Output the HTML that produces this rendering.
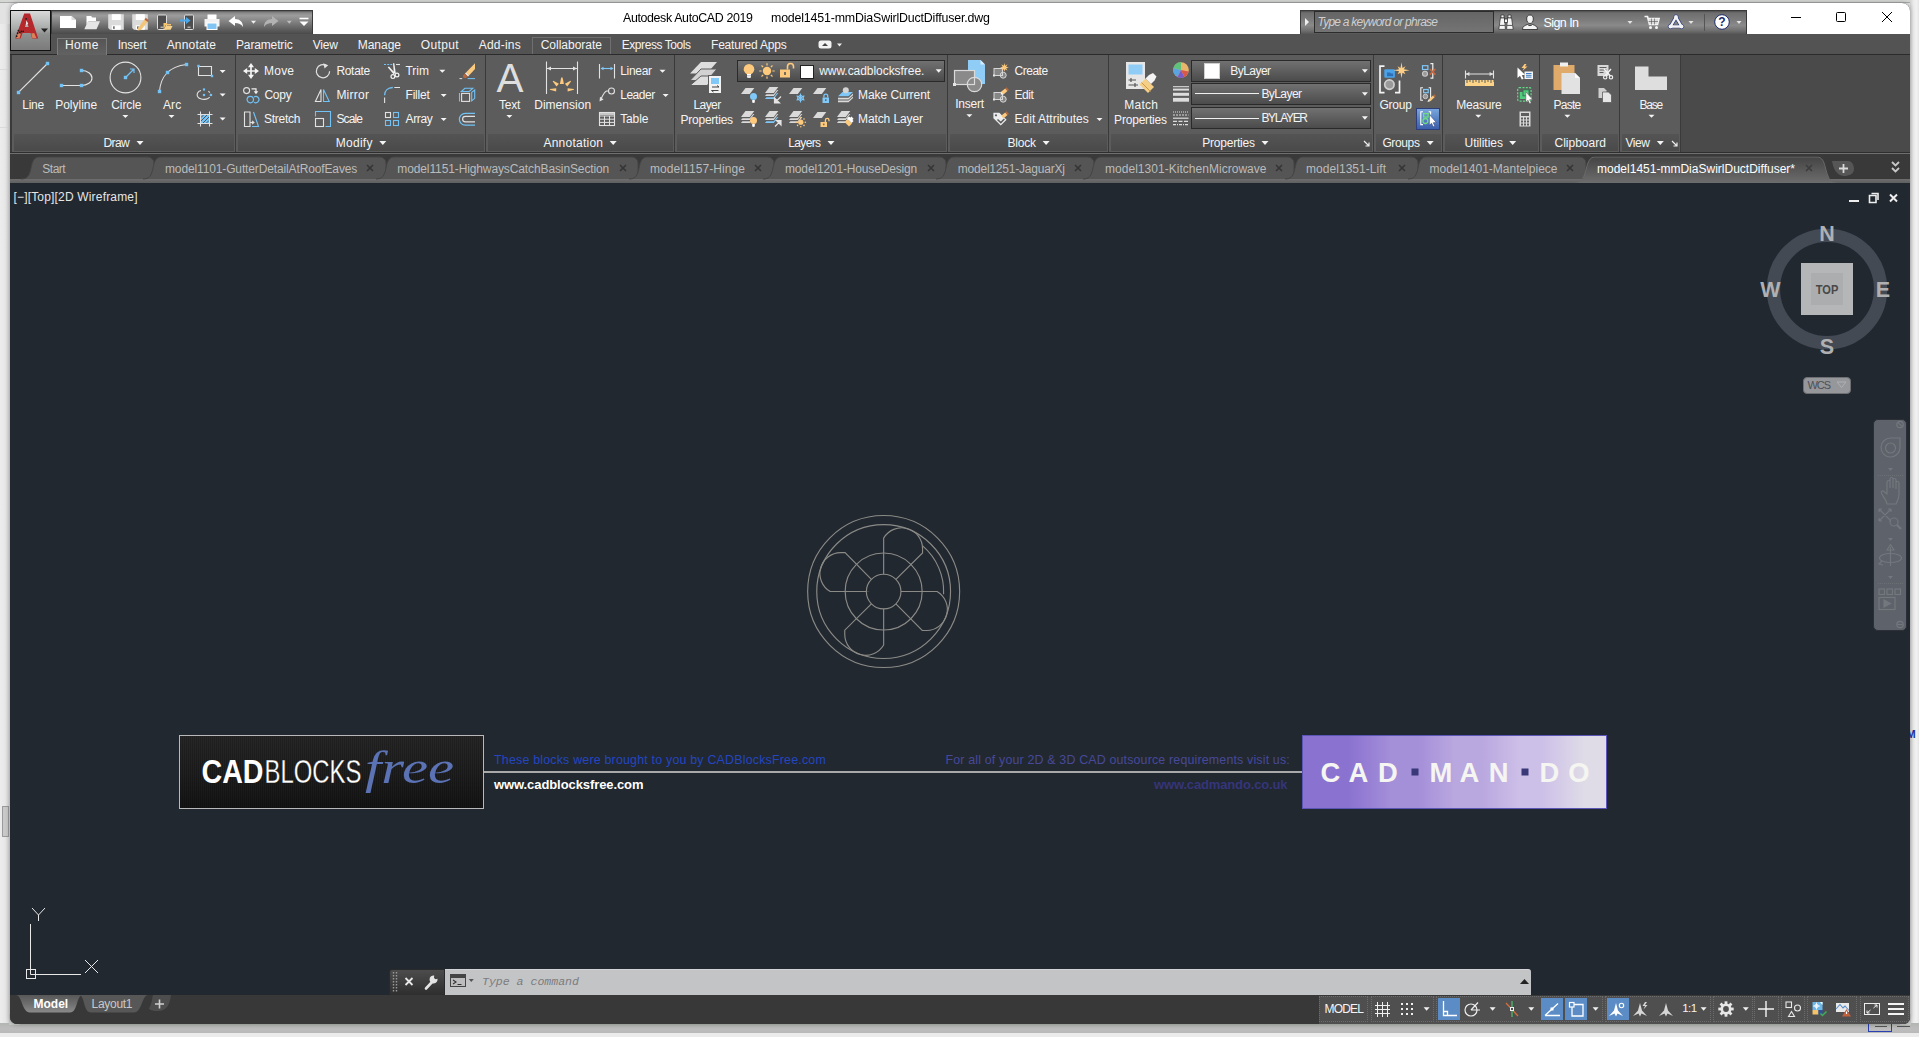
<!DOCTYPE html>
<html lang="en"><head><meta charset="utf-8"><title>Autodesk AutoCAD 2019 - model1451-mmDiaSwirlDuctDiffuser.dwg</title>
<style>
html,body{margin:0;padding:0;}
body{width:1919px;height:1037px;overflow:hidden;position:relative;background:#ececec;font-family:"Liberation Sans",sans-serif;font-size:12px;}
.b{position:absolute;display:block;}
.t{position:absolute;white-space:nowrap;display:block;}
svg{overflow:visible}
</style></head>
<body>
<div class="b" style="left:0px;top:0px;width:1919px;height:24px;background:#e3e3e3;"></div>
<div class="b" style="left:0px;top:0px;width:1919px;height:3px;background:#d5d7d5;"></div>
<div class="b" style="left:0px;top:2px;width:1919px;height:1px;background:#a9aba9;"></div>
<div class="b" style="left:0px;top:24px;width:10px;height:1013px;background:#e8e8e8;background:linear-gradient(90deg,#ededed 0,#e6e6e6 55%,#d2d2d2 100%);"></div>
<div class="b" style="left:1910px;top:0px;width:9px;height:1037px;background:#e6e6e6;background:linear-gradient(90deg,#d2d2d2 0,#ebebeb 40%,#f1f1f1 75%,#e4e4e4 100%);"></div>
<div class="b" style="left:0px;top:1023px;width:1919px;height:14px;background:#ebebeb;"></div>
<div class="b" style="left:0px;top:1023px;width:1919px;height:9.6px;background:#b9bbb9;background:linear-gradient(#b2b6b2,#bdbdbd 60%,#b8b8b8);"></div>
<div class="b" style="left:2px;top:806px;width:7px;height:31px;background:#c9c9c9;border:1px solid #9a9a9a;box-sizing:border-box;"></div>
<div class="b" style="left:1868px;top:1024px;width:24px;height:8px;background:transparent;border:1px solid #2a3fb0;border-top:none;box-sizing:border-box;"></div>
<div class="b" style="left:1875px;top:1026px;width:12px;height:1px;background:#555;"></div>
<div class="b" style="left:1897px;top:1026px;width:13px;height:1px;background:#555;"></div>
<div class="b" style="left:0px;top:69px;width:9px;height:1px;background:#dadada;"></div>
<div class="b" style="left:0px;top:127px;width:9px;height:1px;background:#dadada;"></div>
<span class="t" style="left:1906.50px;top:729.00px;font-size:11px;line-height:11px;color:#2030a8;font-weight:700;">M</span>
<div class="b" style="left:9px;top:1014px;width:11px;height:11px;background:#c9c9c9;"></div>
<div class="b" style="left:1900px;top:1014px;width:11px;height:11px;background:#c9c9c9;"></div>
<div class="b" style="left:10px;top:3px;width:1900px;height:1021px;background:#212830;border-radius:8px 8px 7px 7px;box-shadow:0 0 5px rgba(0,0,0,.3);"></div>
<div class="b" style="left:10px;top:3px;width:1900px;height:31px;background:#ffffff;border-radius:8px 8px 0 0;"></div>
<div class="b" style="left:10px;top:34px;width:1900px;height:21px;background:#535353;"></div>
<div class="b" style="left:10px;top:54px;width:1900px;height:1px;background:#2b2b2b;"></div>
<div class="b" style="left:10px;top:55px;width:1900px;height:98px;background:#4a4a4a;"></div>
<div class="b" style="left:10px;top:152px;width:1900px;height:1px;background:#2e2e2e;"></div>
<div class="b" style="left:10px;top:153px;width:1900px;height:26px;background:#393939;"></div>
<div class="b" style="left:10px;top:179px;width:1900px;height:4px;background:#666;background:linear-gradient(#6e6e6e,#606060);"></div>
<div class="b" style="left:10px;top:183px;width:1900px;height:812px;background:#212830;"></div>
<div class="b" style="left:10px;top:995px;width:1900px;height:29px;background:#383838;border-radius:0 0 7px 7px;"></div>
<div class="b" style="left:10px;top:10px;width:41px;height:41px;background:#8a8a8a;border:1px solid #111;box-sizing:border-box;background:linear-gradient(#d9d9d9 0%,#a9abab 45%,#8e8f8f 60%,#7b7b7b 100%);"></div>
<svg class="b" style="left:14px;top:12px;" width="26" height="28" viewBox="0 0 26 28"><path d="M10.2 1.5 L16 1.5 L24.2 26.5 L18.2 26.5 L16.6 21 L8.6 21 L6.6 26.5 L1.2 26.5 Z M12.7 9.3 L11 15 L14.6 15 Z" fill="#b5282c"/><path d="M2.2 26 L4.2 20.5 L6.8 21.8 L5.6 26.2Z M18.4 26.2 L17.2 21.5 L20.2 21 L22.4 26Z" fill="#d8835a"/><path d="M12.4 8.2 L14.2 11.8 L11.8 13 Z" fill="#e9e9e9"/><g fill="#1c1c1c"><circle cx="12.2" cy="6.8" r=".9"/><circle cx="4.4" cy="18.6" r=".9"/><circle cx="3.6" cy="21.2" r=".9"/><circle cx="2.6" cy="24.2" r=".9"/><circle cx="5.8" cy="20.4" r=".9"/><circle cx="7.4" cy="19.4" r=".8"/><circle cx="9.2" cy="19.4" r=".8"/></g></svg>
<svg class="b" style="left:41px;top:28px;" width="8" height="5" viewBox="0 0 8 5"><path d="M0 0.5 h7 l-3.5 4 z" fill="#222"/></svg>
<div class="b" style="left:51px;top:10px;width:262px;height:24px;background:#666;background:linear-gradient(#5a5a5a 0%,#8a8a8a 8%,#9c9c9c 20%,#7e7e7e 50%,#5e5e5e 80%,#4a4a4a 100%);border:1px solid #3a3a3a;border-bottom:none;box-sizing:border-box;"></div>
<div class="b" style="left:1300px;top:10px;width:447px;height:24px;background:#666;background:linear-gradient(#4c4c4c 0%,#6e6e6e 8%,#7c7c7c 40%,#8a8a8a 62%,#707070 85%,#565656 100%);border:1px solid #3a3a3a;border-bottom:none;box-sizing:border-box;"></div>
<div class="b" style="left:1314px;top:11px;width:180px;height:22px;background:#6d6d6d;border:1px solid #2c2c2c;box-sizing:border-box;background:linear-gradient(#656565,#747474);"></div>
<svg class="b" style="left:1304px;top:17px;" width="6" height="10" viewBox="0 0 6 10"><path d="M1 1 L5 5 L1 9Z" fill="#eee"/></svg>
<span class="t" style="left:1317.50px;top:16.00px;font-size:12px;line-height:12px;color:#cfcfcf;font-style:italic;letter-spacing:-0.754px;">Type a keyword or phrase</span>
<span class="t" style="left:1543.50px;top:17.00px;font-size:12.5px;line-height:12.5px;color:#fff;letter-spacing:-0.569px;">Sign In</span>
<svg class="b" style="left:1627px;top:21px;" width="6" height="4" viewBox="0 0 6 4"><path d="M0.5 0.1 h5 l-2.5 3 z" fill="#e4e4e4"/></svg>
<svg class="b" style="left:1688px;top:21px;" width="6" height="4" viewBox="0 0 6 4"><path d="M0.5 0.1 h5 l-2.5 3 z" fill="#e4e4e4"/></svg>
<svg class="b" style="left:1736px;top:21px;" width="6" height="4" viewBox="0 0 6 4"><path d="M0.5 0.1 h5 l-2.5 3 z" fill="#e4e4e4"/></svg>
<div class="b" style="left:1704px;top:14px;width:1px;height:17px;background:#555;"></div>
<span class="t" style="left:623.00px;top:12.00px;font-size:12.4px;line-height:12.4px;color:#000;letter-spacing:-0.359px;will-change:transform;">Autodesk AutoCAD 2019</span>
<span class="t" style="left:771.00px;top:12.00px;font-size:12.4px;line-height:12.4px;color:#000;letter-spacing:-0.175px;will-change:transform;">model1451-mmDiaSwirlDuctDiffuser.dwg</span>
<svg class="b" style="left:1790px;top:10px;" width="110" height="16" viewBox="0 0 110 16"><path d="M1 7.5 H11" stroke="#000" stroke-width="1"/><rect x="46.5" y="2.5" width="9" height="9" fill="none" stroke="#000" stroke-width="1" rx="1"/><path d="M92 2 L102 12 M102 2 L92 12" stroke="#000" stroke-width="1"/></svg>
<div class="b" style="left:57px;top:38px;width:50px;height:17px;background:#5e5e5e;border:1px solid #7c7c7c;border-bottom:none;box-sizing:border-box;background:linear-gradient(#555,#626262);"></div>
<div class="b" style="left:532px;top:37px;width:79px;height:17px;background:#525252;border:1px solid #6f6f6f;border-bottom:none;box-sizing:border-box;"></div>
<span class="t" style="left:65.00px;top:39.00px;font-size:12px;line-height:12px;color:#f4f4f4;letter-spacing:0.430px;">Home</span>
<span class="t" style="left:117.70px;top:39.00px;font-size:12px;line-height:12px;color:#f4f4f4;letter-spacing:-0.202px;">Insert</span>
<span class="t" style="left:166.70px;top:39.00px;font-size:12px;line-height:12px;color:#f4f4f4;letter-spacing:0.180px;">Annotate</span>
<span class="t" style="left:236.00px;top:39.00px;font-size:12px;line-height:12px;color:#f4f4f4;letter-spacing:-0.146px;">Parametric</span>
<span class="t" style="left:312.70px;top:39.00px;font-size:12px;line-height:12px;color:#f4f4f4;letter-spacing:-0.165px;">View</span>
<span class="t" style="left:357.70px;top:39.00px;font-size:12px;line-height:12px;color:#f4f4f4;letter-spacing:-0.013px;">Manage</span>
<span class="t" style="left:420.70px;top:39.00px;font-size:12px;line-height:12px;color:#f4f4f4;letter-spacing:0.395px;">Output</span>
<span class="t" style="left:478.70px;top:39.00px;font-size:12px;line-height:12px;color:#f4f4f4;letter-spacing:0.218px;">Add-ins</span>
<span class="t" style="left:540.70px;top:39.00px;font-size:12px;line-height:12px;color:#f4f4f4;letter-spacing:-0.007px;">Collaborate</span>
<span class="t" style="left:621.70px;top:39.00px;font-size:12px;line-height:12px;color:#f4f4f4;letter-spacing:-0.432px;">Express Tools</span>
<span class="t" style="left:711.00px;top:39.00px;font-size:12px;line-height:12px;color:#f4f4f4;letter-spacing:-0.196px;">Featured Apps</span>
<svg class="b" style="left:818px;top:40px;" width="14" height="9" viewBox="0 0 14 9"><rect x=".5" y=".5" width="13" height="8" rx="2.5" fill="#f2f2f2"/><path d="M4 6 L7 3 L10 6Z" fill="#444"/></svg>
<svg class="b" style="left:837px;top:43px;" width="6" height="4" viewBox="0 0 6 4"><path d="M0 0.5 h5 l-2.5 3 z" fill="#eee"/></svg>
<div class="b" style="left:10px;top:153px;width:1900px;height:1px;background:#6f6f6f;"></div>
<svg class="b" style="left:21px;top:157px;" width="133" height="22" viewBox="0 0 133 22"><path d="M0 22 C6 22 8.5 19 10 11 C11.5 4 13 0 18 0 H127 A6 6 0 0 1 133 6 V22 Z" fill="#555"/><path d="M0 22 C6 22 8.5 19 10 11 C11.5 4 13 0 18 0 H127 A6 6 0 0 1 133 6 V22" fill="none" stroke="#444" stroke-width="1"/></svg>
<span class="t" style="left:42.30px;top:163.00px;font-size:12px;line-height:12px;color:#bbbbbb;letter-spacing:-0.486px;">Start</span>
<svg class="b" style="left:143px;top:157px;" width="243" height="22" viewBox="0 0 243 22"><path d="M0 22 C6 22 8.5 19 10 11 C11.5 4 13 0 18 0 H237 A6 6 0 0 1 243 6 V22 Z" fill="#555"/><path d="M0 22 C6 22 8.5 19 10 11 C11.5 4 13 0 18 0 H237 A6 6 0 0 1 243 6 V22" fill="none" stroke="#444" stroke-width="1"/></svg>
<span class="t" style="left:165.00px;top:163.00px;font-size:12px;line-height:12px;color:#bbbbbb;letter-spacing:-0.133px;">model1101-GutterDetailAtRoofEaves</span>
<svg class="b" style="left:366px;top:164px;" width="8" height="8" viewBox="0 0 8 8"><path d="M1 1 L7 7 M7 1 L1 7" stroke="#353535" stroke-width="1.6"/></svg>
<svg class="b" style="left:376px;top:157px;" width="262" height="22" viewBox="0 0 262 22"><path d="M0 22 C6 22 8.5 19 10 11 C11.5 4 13 0 18 0 H256 A6 6 0 0 1 262 6 V22 Z" fill="#555"/><path d="M0 22 C6 22 8.5 19 10 11 C11.5 4 13 0 18 0 H256 A6 6 0 0 1 262 6 V22" fill="none" stroke="#444" stroke-width="1"/></svg>
<span class="t" style="left:397.30px;top:163.00px;font-size:12px;line-height:12px;color:#bbbbbb;letter-spacing:-0.115px;">model1151-HighwaysCatchBasinSection</span>
<svg class="b" style="left:619px;top:164px;" width="8" height="8" viewBox="0 0 8 8"><path d="M1 1 L7 7 M7 1 L1 7" stroke="#353535" stroke-width="1.6"/></svg>
<svg class="b" style="left:629px;top:157px;" width="145" height="22" viewBox="0 0 145 22"><path d="M0 22 C6 22 8.5 19 10 11 C11.5 4 13 0 18 0 H139 A6 6 0 0 1 145 6 V22 Z" fill="#555"/><path d="M0 22 C6 22 8.5 19 10 11 C11.5 4 13 0 18 0 H139 A6 6 0 0 1 145 6 V22" fill="none" stroke="#444" stroke-width="1"/></svg>
<span class="t" style="left:650.00px;top:163.00px;font-size:12px;line-height:12px;color:#bbbbbb;letter-spacing:0.083px;">model1157-Hinge</span>
<svg class="b" style="left:754px;top:164px;" width="8" height="8" viewBox="0 0 8 8"><path d="M1 1 L7 7 M7 1 L1 7" stroke="#353535" stroke-width="1.6"/></svg>
<svg class="b" style="left:763px;top:157px;" width="183" height="22" viewBox="0 0 183 22"><path d="M0 22 C6 22 8.5 19 10 11 C11.5 4 13 0 18 0 H177 A6 6 0 0 1 183 6 V22 Z" fill="#555"/><path d="M0 22 C6 22 8.5 19 10 11 C11.5 4 13 0 18 0 H177 A6 6 0 0 1 183 6 V22" fill="none" stroke="#444" stroke-width="1"/></svg>
<span class="t" style="left:785.00px;top:163.00px;font-size:12px;line-height:12px;color:#bbbbbb;letter-spacing:-0.156px;">model1201-HouseDesign</span>
<svg class="b" style="left:927px;top:164px;" width="8" height="8" viewBox="0 0 8 8"><path d="M1 1 L7 7 M7 1 L1 7" stroke="#353535" stroke-width="1.6"/></svg>
<svg class="b" style="left:936px;top:157px;" width="158" height="22" viewBox="0 0 158 22"><path d="M0 22 C6 22 8.5 19 10 11 C11.5 4 13 0 18 0 H152 A6 6 0 0 1 158 6 V22 Z" fill="#555"/><path d="M0 22 C6 22 8.5 19 10 11 C11.5 4 13 0 18 0 H152 A6 6 0 0 1 158 6 V22" fill="none" stroke="#444" stroke-width="1"/></svg>
<span class="t" style="left:957.70px;top:163.00px;font-size:12px;line-height:12px;color:#bbbbbb;letter-spacing:-0.202px;">model1251-JaguarXj</span>
<svg class="b" style="left:1074px;top:164px;" width="8" height="8" viewBox="0 0 8 8"><path d="M1 1 L7 7 M7 1 L1 7" stroke="#353535" stroke-width="1.6"/></svg>
<svg class="b" style="left:1083px;top:157px;" width="211" height="22" viewBox="0 0 211 22"><path d="M0 22 C6 22 8.5 19 10 11 C11.5 4 13 0 18 0 H205 A6 6 0 0 1 211 6 V22 Z" fill="#555"/><path d="M0 22 C6 22 8.5 19 10 11 C11.5 4 13 0 18 0 H205 A6 6 0 0 1 211 6 V22" fill="none" stroke="#444" stroke-width="1"/></svg>
<span class="t" style="left:1105.00px;top:163.00px;font-size:12px;line-height:12px;color:#bbbbbb;letter-spacing:0.030px;">model1301-KitchenMicrowave</span>
<svg class="b" style="left:1275px;top:164px;" width="8" height="8" viewBox="0 0 8 8"><path d="M1 1 L7 7 M7 1 L1 7" stroke="#353535" stroke-width="1.6"/></svg>
<svg class="b" style="left:1285px;top:157px;" width="133" height="22" viewBox="0 0 133 22"><path d="M0 22 C6 22 8.5 19 10 11 C11.5 4 13 0 18 0 H127 A6 6 0 0 1 133 6 V22 Z" fill="#555"/><path d="M0 22 C6 22 8.5 19 10 11 C11.5 4 13 0 18 0 H127 A6 6 0 0 1 133 6 V22" fill="none" stroke="#444" stroke-width="1"/></svg>
<span class="t" style="left:1306.00px;top:163.00px;font-size:12px;line-height:12px;color:#bbbbbb;letter-spacing:0.047px;">model1351-Lift</span>
<svg class="b" style="left:1398px;top:164px;" width="8" height="8" viewBox="0 0 8 8"><path d="M1 1 L7 7 M7 1 L1 7" stroke="#353535" stroke-width="1.6"/></svg>
<svg class="b" style="left:1408px;top:157px;" width="178" height="22" viewBox="0 0 178 22"><path d="M0 22 C6 22 8.5 19 10 11 C11.5 4 13 0 18 0 H172 A6 6 0 0 1 178 6 V22 Z" fill="#555"/><path d="M0 22 C6 22 8.5 19 10 11 C11.5 4 13 0 18 0 H172 A6 6 0 0 1 178 6 V22" fill="none" stroke="#444" stroke-width="1"/></svg>
<span class="t" style="left:1429.50px;top:163.00px;font-size:12px;line-height:12px;color:#bbbbbb;letter-spacing:-0.004px;">model1401-Mantelpiece</span>
<svg class="b" style="left:1566px;top:164px;" width="8" height="8" viewBox="0 0 8 8"><path d="M1 1 L7 7 M7 1 L1 7" stroke="#353535" stroke-width="1.6"/></svg>
<svg class="b" style="left:1573px;top:157px;" width="266" height="26" viewBox="0 0 266 26"><defs><linearGradient id="ga" x1="0" y1="0" x2="0" y2="1"><stop offset="0" stop-color="#444"/><stop offset="1" stop-color="#6d6d6d"/></linearGradient></defs><path d="M0 26 C8 26 10 23 13 13 C15 4 17 0 22 0 H244 C249 0 251 4 253 13 C256 23 258 26 266 26 Z" fill="url(#ga)"/><path d="M0 26 C8 26 10 23 13 13 C15 4 17 0 22 0 H244 C249 0 251 4 253 13 C256 23 258 26 266 26 Z" fill="none" stroke="#6a6a6a" stroke-width="1" clip-path="inset(0 0 5px 0)"/></svg>
<span class="t" style="left:1597.00px;top:163.00px;font-size:12px;line-height:12px;color:#fff;letter-spacing:0.005px;">model1451-mmDiaSwirlDuctDiffuser*</span>
<svg class="b" style="left:1804.5px;top:164px;" width="8" height="8" viewBox="0 0 8 8"><path d="M1 1 L7 7 M7 1 L1 7" stroke="#3c3c3c" stroke-width="1.6"/></svg>
<svg class="b" style="left:1831px;top:161px;" width="24" height="15" viewBox="0 0 24 15"><path d="M1 0 H17 C22 0 23 6 23 8 C23 13 18 15 13 15 C5 15 2 6 1 0Z" fill="#565656"/><path d="M8 7.5 H17 M12.5 3 V12" stroke="#d8d8d8" stroke-width="1.8"/></svg>
<svg class="b" style="left:1891px;top:161px;" width="9" height="13" viewBox="0 0 9 13"><path d="M1 1 L4.5 4.5 L8 1 M1 7 L4.5 10.5 L8 7" stroke="#c8c8c8" stroke-width="1.8" fill="none"/></svg>
<span class="t" style="left:13.50px;top:191.00px;font-size:12px;line-height:12px;color:#e6e6e6;letter-spacing:0.173px;">[−][Top][2D Wireframe]</span>
<svg class="b" style="left:1848px;top:192px;" width="52" height="12" viewBox="0 0 52 12"><path d="M1 9 H11" stroke="#eee" stroke-width="2"/><path d="M23.5 1.5 H30 V8 M21.5 3.5 H28 V10.5 H21.5Z" stroke="#eee" stroke-width="1.6" fill="none"/><path d="M42 2.5 L49 9.5 M49 2.5 L42 9.5" stroke="#eee" stroke-width="2"/></svg>
<div class="b" style="left:10px;top:55px;width:1671px;height:97px;background:#3a3a3a;"></div>
<div class="b" style="left:12px;top:55px;width:1668px;height:97px;background:#5c5c5c;"></div>
<div class="b" style="left:13.5px;top:134px;width:220px;height:17.3px;background:#4e4e4e;background:linear-gradient(#545454,#4a4a4a);"></div>
<div class="b" style="left:237.5px;top:134px;width:246px;height:17.3px;background:#4e4e4e;background:linear-gradient(#545454,#4a4a4a);"></div>
<div class="b" style="left:487.5px;top:134px;width:185px;height:17.3px;background:#4e4e4e;background:linear-gradient(#545454,#4a4a4a);"></div>
<div class="b" style="left:676.5px;top:134px;width:269px;height:17.3px;background:#4e4e4e;background:linear-gradient(#545454,#4a4a4a);"></div>
<div class="b" style="left:949.5px;top:134px;width:157px;height:17.3px;background:#4e4e4e;background:linear-gradient(#545454,#4a4a4a);"></div>
<div class="b" style="left:1110.5px;top:134px;width:261px;height:17.3px;background:#4e4e4e;background:linear-gradient(#545454,#4a4a4a);"></div>
<div class="b" style="left:1375.5px;top:134px;width:65px;height:17.3px;background:#4e4e4e;background:linear-gradient(#545454,#4a4a4a);"></div>
<div class="b" style="left:1444.5px;top:134px;width:93px;height:17.3px;background:#4e4e4e;background:linear-gradient(#545454,#4a4a4a);"></div>
<div class="b" style="left:1541.5px;top:134px;width:76px;height:17.3px;background:#4e4e4e;background:linear-gradient(#545454,#4a4a4a);"></div>
<div class="b" style="left:1621.5px;top:134px;width:57px;height:17.3px;background:#4e4e4e;background:linear-gradient(#545454,#4a4a4a);"></div>
<div class="b" style="left:235px;top:55px;width:1px;height:97px;background:#3a3a3a;"></div>
<div class="b" style="left:485px;top:55px;width:1px;height:97px;background:#3a3a3a;"></div>
<div class="b" style="left:674px;top:55px;width:1px;height:97px;background:#3a3a3a;"></div>
<div class="b" style="left:947px;top:55px;width:1px;height:97px;background:#3a3a3a;"></div>
<div class="b" style="left:1108px;top:55px;width:1px;height:97px;background:#3a3a3a;"></div>
<div class="b" style="left:1373px;top:55px;width:1px;height:97px;background:#3a3a3a;"></div>
<div class="b" style="left:1442px;top:55px;width:1px;height:97px;background:#3a3a3a;"></div>
<div class="b" style="left:1539px;top:55px;width:1px;height:97px;background:#3a3a3a;"></div>
<div class="b" style="left:1619px;top:55px;width:1px;height:97px;background:#3a3a3a;"></div>
<div class="b" style="left:1680px;top:55px;width:1px;height:97px;background:#3a3a3a;"></div>
<span class="t" style="left:103.40px;top:137.00px;font-size:12px;line-height:12px;color:#f4f4f4;letter-spacing:-0.534px;">Draw</span>
<svg class="b" style="left:136px;top:141px;" width="8" height="5" viewBox="0 0 8 5"><path d="M0.5 0 h7 l-3.5 4 z" fill="#f4f4f4"/></svg>
<span class="t" style="left:335.70px;top:137.00px;font-size:12px;line-height:12px;color:#f4f4f4;letter-spacing:0.291px;">Modify</span>
<svg class="b" style="left:379px;top:141px;" width="8" height="5" viewBox="0 0 8 5"><path d="M0.3 0 h7 l-3.5 4 z" fill="#f4f4f4"/></svg>
<span class="t" style="left:543.40px;top:137.00px;font-size:12px;line-height:12px;color:#f4f4f4;letter-spacing:0.246px;">Annotation</span>
<svg class="b" style="left:609px;top:141px;" width="8" height="5" viewBox="0 0 8 5"><path d="M0.7 0 h7 l-3.5 4 z" fill="#f4f4f4"/></svg>
<span class="t" style="left:788.30px;top:137.00px;font-size:12px;line-height:12px;color:#f4f4f4;letter-spacing:-0.664px;">Layers</span>
<svg class="b" style="left:827px;top:141px;" width="8" height="5" viewBox="0 0 8 5"><path d="M0.5 0 h7 l-3.5 4 z" fill="#f4f4f4"/></svg>
<span class="t" style="left:1007.50px;top:137.00px;font-size:12px;line-height:12px;color:#f4f4f4;letter-spacing:-0.236px;">Block</span>
<svg class="b" style="left:1042px;top:141px;" width="8" height="5" viewBox="0 0 8 5"><path d="M0.6 0 h7 l-3.5 4 z" fill="#f4f4f4"/></svg>
<span class="t" style="left:1202.30px;top:137.00px;font-size:12px;line-height:12px;color:#f4f4f4;letter-spacing:-0.233px;">Properties</span>
<svg class="b" style="left:1261px;top:141px;" width="8" height="5" viewBox="0 0 8 5"><path d="M0.5 0 h7 l-3.5 4 z" fill="#f4f4f4"/></svg>
<svg class="b" style="left:1363px;top:140px;" width="7" height="7" viewBox="0 0 7 7"><path d="M1 1 L5.5 5.5 M2.5 6 H6 V2.5" stroke="#eee" stroke-width="1.2" fill="none"/></svg>
<span class="t" style="left:1382.40px;top:137.00px;font-size:12px;line-height:12px;color:#f4f4f4;letter-spacing:-0.370px;">Groups</span>
<svg class="b" style="left:1426px;top:141px;" width="8" height="5" viewBox="0 0 8 5"><path d="M0.7 0 h7 l-3.5 4 z" fill="#f4f4f4"/></svg>
<span class="t" style="left:1464.60px;top:137.00px;font-size:12px;line-height:12px;color:#f4f4f4;letter-spacing:-0.047px;">Utilities</span>
<svg class="b" style="left:1509px;top:141px;" width="8" height="5" viewBox="0 0 8 5"><path d="M0.2 0 h7 l-3.5 4 z" fill="#f4f4f4"/></svg>
<span class="t" style="left:1554.50px;top:137.00px;font-size:12px;line-height:12px;color:#f4f4f4;letter-spacing:0.004px;">Clipboard</span>
<span class="t" style="left:1625.40px;top:137.00px;font-size:12px;line-height:12px;color:#f4f4f4;letter-spacing:-0.398px;">View</span>
<svg class="b" style="left:1656px;top:141px;" width="8" height="5" viewBox="0 0 8 5"><path d="M0.8 0 h7 l-3.5 4 z" fill="#f4f4f4"/></svg>
<svg class="b" style="left:1671px;top:140px;" width="7" height="7" viewBox="0 0 7 7"><path d="M1 1 L5.5 5.5 M2.5 6 H6 V2.5" stroke="#eee" stroke-width="1.2" fill="none"/></svg>
<span class="t" style="left:22.30px;top:99.00px;font-size:12px;line-height:12px;color:#f4f4f4;letter-spacing:-0.296px;">Line</span>
<span class="t" style="left:55.20px;top:99.00px;font-size:12px;line-height:12px;color:#f4f4f4;letter-spacing:-0.004px;">Polyline</span>
<span class="t" style="left:111.30px;top:99.00px;font-size:12px;line-height:12px;color:#f4f4f4;letter-spacing:-0.114px;">Circle</span>
<span class="t" style="left:163.00px;top:99.00px;font-size:12px;line-height:12px;color:#f4f4f4;letter-spacing:0.100px;">Arc</span>
<svg class="b" style="left:122px;top:115px;" width="7" height="4" viewBox="0 0 7 4"><path d="M0.4 0 h6 l-3 3 z" fill="#f4f4f4"/></svg>
<svg class="b" style="left:168px;top:115px;" width="7" height="4" viewBox="0 0 7 4"><path d="M0.5 0 h6 l-3 3 z" fill="#f4f4f4"/></svg>
<svg class="b" style="left:219px;top:69px;" width="7" height="4" viewBox="0 0 7 4"><path d="M0.6 0.9 h6 l-3 3 z" fill="#f4f4f4"/></svg>
<svg class="b" style="left:219px;top:93px;" width="7" height="4" viewBox="0 0 7 4"><path d="M0.6 0.5 h6 l-3 3 z" fill="#f4f4f4"/></svg>
<svg class="b" style="left:219px;top:117px;" width="7" height="4" viewBox="0 0 7 4"><path d="M0.6 0.5 h6 l-3 3 z" fill="#f4f4f4"/></svg>
<span class="t" style="left:264.10px;top:65.00px;font-size:12px;line-height:12px;color:#f4f4f4;letter-spacing:0.185px;">Move</span>
<span class="t" style="left:264.40px;top:89.00px;font-size:12px;line-height:12px;color:#f4f4f4;letter-spacing:-0.238px;">Copy</span>
<span class="t" style="left:264.00px;top:113.00px;font-size:12px;line-height:12px;color:#f4f4f4;letter-spacing:-0.253px;">Stretch</span>
<span class="t" style="left:336.40px;top:65.00px;font-size:12px;line-height:12px;color:#f4f4f4;letter-spacing:-0.311px;">Rotate</span>
<span class="t" style="left:336.40px;top:89.00px;font-size:12px;line-height:12px;color:#f4f4f4;letter-spacing:0.235px;">Mirror</span>
<span class="t" style="left:336.40px;top:113.00px;font-size:12px;line-height:12px;color:#f4f4f4;letter-spacing:-0.855px;">Scale</span>
<span class="t" style="left:405.50px;top:65.00px;font-size:12px;line-height:12px;color:#f4f4f4;letter-spacing:-0.048px;">Trim</span>
<span class="t" style="left:405.50px;top:89.00px;font-size:12px;line-height:12px;color:#f4f4f4;letter-spacing:-0.187px;">Fillet</span>
<span class="t" style="left:405.50px;top:113.00px;font-size:12px;line-height:12px;color:#f4f4f4;letter-spacing:-0.343px;">Array</span>
<svg class="b" style="left:439px;top:69px;" width="7" height="4" viewBox="0 0 7 4"><path d="M0.3 0.8 h6 l-3 3 z" fill="#f4f4f4"/></svg>
<svg class="b" style="left:440px;top:93px;" width="7" height="4" viewBox="0 0 7 4"><path d="M0.7 0.9 h6 l-3 3 z" fill="#f4f4f4"/></svg>
<svg class="b" style="left:440px;top:117px;" width="7" height="4" viewBox="0 0 7 4"><path d="M0.7 0.9 h6 l-3 3 z" fill="#f4f4f4"/></svg>
<span class="t" style="left:499.00px;top:99.00px;font-size:12px;line-height:12px;color:#f4f4f4;letter-spacing:-0.203px;">Text</span>
<svg class="b" style="left:506px;top:114px;" width="7" height="4" viewBox="0 0 7 4"><path d="M0.4 0.9 h6 l-3 3 z" fill="#f4f4f4"/></svg>
<span class="t" style="left:534.20px;top:99.00px;font-size:12px;line-height:12px;color:#f4f4f4;letter-spacing:0.026px;">Dimension</span>
<span class="t" style="left:620.20px;top:65.00px;font-size:12px;line-height:12px;color:#f4f4f4;letter-spacing:-0.292px;">Linear</span>
<span class="t" style="left:620.20px;top:89.00px;font-size:12px;line-height:12px;color:#f4f4f4;letter-spacing:-0.473px;">Leader</span>
<span class="t" style="left:620.20px;top:113.00px;font-size:12px;line-height:12px;color:#f4f4f4;letter-spacing:-0.122px;">Table</span>
<svg class="b" style="left:659px;top:69px;" width="7" height="4" viewBox="0 0 7 4"><path d="M0.5 0.8 h6 l-3 3 z" fill="#f4f4f4"/></svg>
<svg class="b" style="left:662px;top:93px;" width="7" height="4" viewBox="0 0 7 4"><path d="M0.6 0.9 h6 l-3 3 z" fill="#f4f4f4"/></svg>
<span class="t" style="left:693.40px;top:99.00px;font-size:12px;line-height:12px;color:#f4f4f4;letter-spacing:-0.555px;">Layer</span>
<span class="t" style="left:680.50px;top:114.00px;font-size:12px;line-height:12px;color:#f4f4f4;letter-spacing:-0.233px;">Properties</span>
<div class="b" style="left:737px;top:60px;width:208px;height:22px;background:#444;border:1px solid #2a2a2a;box-sizing:border-box;background:linear-gradient(#717171,#626262 40%,#4b4b4b);"></div>
<div class="b" style="left:800px;top:65px;width:14px;height:14px;background:#fff;border:1px solid #222;box-sizing:border-box;"></div>
<span class="t" style="left:819.20px;top:65.00px;font-size:12px;line-height:12px;color:#f4f4f4;letter-spacing:-0.050px;">www.cadblocksfree.</span>
<svg class="b" style="left:935px;top:69px;" width="7" height="4.5" viewBox="0 0 7 4.5"><path d="M0.7 0.25 h6 l-3 3.5 z" fill="#f4f4f4"/></svg>
<span class="t" style="left:858.00px;top:89.00px;font-size:12px;line-height:12px;color:#f4f4f4;letter-spacing:-0.054px;">Make Current</span>
<span class="t" style="left:858.00px;top:113.00px;font-size:12px;line-height:12px;color:#f4f4f4;letter-spacing:-0.103px;">Match Layer</span>
<span class="t" style="left:955.20px;top:98.00px;font-size:12px;line-height:12px;color:#f4f4f4;letter-spacing:-0.242px;">Insert</span>
<svg class="b" style="left:966px;top:114px;" width="7" height="4" viewBox="0 0 7 4"><path d="M0.4 0.2 h6 l-3 3 z" fill="#f4f4f4"/></svg>
<span class="t" style="left:1014.50px;top:65.00px;font-size:12px;line-height:12px;color:#f4f4f4;letter-spacing:-0.484px;">Create</span>
<span class="t" style="left:1014.50px;top:89.00px;font-size:12px;line-height:12px;color:#f4f4f4;letter-spacing:-0.459px;">Edit</span>
<span class="t" style="left:1014.50px;top:113.00px;font-size:12px;line-height:12px;color:#f4f4f4;letter-spacing:0.019px;">Edit Attributes</span>
<svg class="b" style="left:1096px;top:117px;" width="7" height="4" viewBox="0 0 7 4"><path d="M0.5 0.9 h6 l-3 3 z" fill="#f4f4f4"/></svg>
<span class="t" style="left:1124.30px;top:99.00px;font-size:12px;line-height:12px;color:#f4f4f4;letter-spacing:0.230px;">Match</span>
<span class="t" style="left:1114.10px;top:114.00px;font-size:12px;line-height:12px;color:#f4f4f4;letter-spacing:-0.199px;">Properties</span>
<div class="b" style="left:1191px;top:60px;width:180px;height:22px;background:#444;border:1px solid #2a2a2a;box-sizing:border-box;background:linear-gradient(#717171,#626262 40%,#4b4b4b);"></div>
<div class="b" style="left:1191px;top:83px;width:180px;height:22px;background:#444;border:1px solid #2a2a2a;box-sizing:border-box;background:linear-gradient(#717171,#626262 40%,#4b4b4b);"></div>
<div class="b" style="left:1191px;top:107px;width:180px;height:22px;background:#444;border:1px solid #2a2a2a;box-sizing:border-box;background:linear-gradient(#717171,#626262 40%,#4b4b4b);"></div>
<div class="b" style="left:1204px;top:63px;width:16px;height:16px;background:#fff;border:1px solid #cfcfcf;box-sizing:border-box;"></div>
<span class="t" style="left:1230.20px;top:65.00px;font-size:12px;line-height:12px;color:#f4f4f4;letter-spacing:-0.521px;">ByLayer</span>
<svg class="b" style="left:1361px;top:69px;" width="7" height="4.5" viewBox="0 0 7 4.5"><path d="M0.9 0.25 h6 l-3 3.5 z" fill="#f4f4f4"/></svg>
<div class="b" style="left:1195px;top:93px;width:64px;height:1.3px;background:#f0f0f0;"></div>
<span class="t" style="left:1261.40px;top:88.00px;font-size:12px;line-height:12px;color:#f4f4f4;letter-spacing:-0.571px;">ByLayer</span>
<svg class="b" style="left:1361px;top:92px;" width="7" height="4.5" viewBox="0 0 7 4.5"><path d="M0.9 0.25 h6 l-3 3.5 z" fill="#f4f4f4"/></svg>
<div class="b" style="left:1195px;top:117.5px;width:64px;height:1.3px;background:#f0f0f0;"></div>
<span class="t" style="left:1261.40px;top:112.00px;font-size:12px;line-height:12px;color:#f4f4f4;letter-spacing:-1.312px;">BYLAYER</span>
<svg class="b" style="left:1361px;top:116px;" width="7" height="4.5" viewBox="0 0 7 4.5"><path d="M0.9 0.25 h6 l-3 3.5 z" fill="#f4f4f4"/></svg>
<span class="t" style="left:1379.50px;top:99.00px;font-size:12px;line-height:12px;color:#f4f4f4;letter-spacing:-0.263px;">Group</span>
<div class="b" style="left:1416px;top:108px;width:24px;height:22px;background:#4a72b0;border:1px solid #2c3f7a;box-sizing:border-box;background:linear-gradient(#7aa6dc,#5a86c6 45%,#3d5eac);"></div>
<span class="t" style="left:1456.30px;top:99.00px;font-size:12px;line-height:12px;color:#f4f4f4;letter-spacing:-0.232px;">Measure</span>
<svg class="b" style="left:1475px;top:114px;" width="7" height="4" viewBox="0 0 7 4"><path d="M0.3 0.7 h6 l-3 3 z" fill="#f4f4f4"/></svg>
<span class="t" style="left:1553.50px;top:99.00px;font-size:12px;line-height:12px;color:#f4f4f4;letter-spacing:-0.747px;">Paste</span>
<svg class="b" style="left:1564px;top:114px;" width="7" height="4" viewBox="0 0 7 4"><path d="M0.4 0.7 h6 l-3 3 z" fill="#f4f4f4"/></svg>
<span class="t" style="left:1639.50px;top:99.00px;font-size:12px;line-height:12px;color:#f4f4f4;letter-spacing:-1.217px;">Base</span>
<svg class="b" style="left:1648px;top:114px;" width="7" height="4" viewBox="0 0 7 4"><path d="M0.5 0.7 h6 l-3 3 z" fill="#f4f4f4"/></svg>
<svg class="b" style="left:60px;top:14px;" width="16" height="16" viewBox="0 0 16 16"><path d="M0 2 H11.5 L16 6 V14 H0Z" fill="#fff"/><path d="M11.5 2 V6 H16Z" fill="#dcdcdc"/></svg>
<svg class="b" style="left:84px;top:14px;" width="16" height="16" viewBox="0 0 16 16"><path d="M2.5 2 H7 L8.5 3.5 H12 V7 H4.5 L2.5 11Z" fill="#fff"/><path d="M4 7.2 H16 L12.5 15.2 H0.3Z" fill="#e6e6e6"/></svg>
<svg class="b" style="left:108px;top:14px;" width="16" height="16" viewBox="0 0 16 16"><path d="M0.2 0.2 H15.8 V15.8 H2 L0.2 14Z" fill="#dbdbdb"/><rect x="3.8" y="0.2" width="9" height="5.8" fill="#fff"/><rect x="3.8" y="11.3" width="9" height="4.5" fill="#fff"/><rect x="5.2" y="12.3" width="1.4" height="2.6" fill="#555"/></svg>
<svg class="b" style="left:132px;top:14px;" width="16" height="16" viewBox="0 0 16 16"><path d="M0.2 0.2 H15.8 V15.8 H2 L0.2 14Z" fill="#dbdbdb"/><rect x="3.8" y="0.2" width="9" height="5.8" fill="#fff"/><rect x="3.8" y="11.3" width="9" height="4.5" fill="#fff"/><rect x="5.2" y="12.3" width="1.4" height="2.6" fill="#555"/><path d="M6 14 L12.5 5.5 L15.5 8 L9 16 L5.5 16.5Z" fill="#f2c57a"/><path d="M12.5 5.5 L13.8 3.8 L16.6 6.2 L15.5 8Z" fill="#b5623b"/></svg>
<svg class="b" style="left:156px;top:14px;" width="16" height="16" viewBox="0 0 16 16"><rect x="1.5" y="1" width="9" height="14.5" rx="1" fill="#4e4e4e" stroke="#dcdcdc" stroke-width="1"/><path d="M4.5 13.2 h3" stroke="#ddd" stroke-width="1"/><path d="M7.5 9 H10.5 L11.5 10 H15 V11.5 H9.5 L7.5 15.5Z" fill="#f3c46a"/><path d="M9.6 12 H16.5 L14.6 15.8 H7.6Z" fill="#f6d28a"/></svg>
<svg class="b" style="left:180px;top:14px;" width="16" height="16" viewBox="0 0 16 16"><rect x="4.5" y="1" width="9" height="14.5" rx="1" fill="#4e4e4e" stroke="#dcdcdc" stroke-width="1"/><path d="M7.5 13.2 h3" stroke="#ddd" stroke-width="1"/><path d="M0 5.5 H6 V3 L10.5 6.5 L6 10 V7.5 H0Z" fill="#4aa8ea"/></svg>
<svg class="b" style="left:204px;top:14px;" width="16" height="16" viewBox="0 0 16 16"><rect x="3.5" y="0.5" width="9" height="5" fill="#fff"/><path d="M0.5 5 H15.5 V12.5 H0.5Z" fill="#f2f2f2"/><rect x="3" y="9" width="10" height="6.5" fill="#7fc4f3" stroke="#fff" stroke-width="1"/></svg>
<svg class="b" style="left:228px;top:14px;" width="16" height="16" viewBox="0 0 16 16"><path d="M0.5 7 L7 2 V5 C12 5 15 8 15 13 C13 10 11 9 7 9 V12Z" fill="#fff"/></svg>
<svg class="b" style="left:251px;top:20px;" width="6" height="4" viewBox="0 0 6 4"><path d="M0 0.8 h5 l-2.5 3 z" fill="#f0f0f0"/></svg>
<svg class="b" style="left:263px;top:14px;" width="16" height="16" viewBox="0 0 16 16"><path d="M15.5 7 L9 2 V5 C4 5 1 8 1 13 C3 10 5 9 9 9 V12Z" fill="#b2b2b2"/></svg>
<svg class="b" style="left:286px;top:20px;" width="6" height="4" viewBox="0 0 6 4"><path d="M0.8 0.8 h5 l-2.5 3 z" fill="#bdbdbd"/></svg>
<svg class="b" style="left:299px;top:17px;" width="10" height="10" viewBox="0 0 10 10"><path d="M0.5 1.5 H9.5" stroke="#fff" stroke-width="1.6"/><path d="M0.5 4.5 H9.5 L5 9Z" fill="#fff"/></svg>
<svg class="b" style="left:1498px;top:14px;" width="16" height="16" viewBox="0 0 16 16"><g fill="#f4f4f4" stroke="#2a2a2a" stroke-width=".7"><path d="M3 1 H6 V4 H3Z M10 1 H13 V4 H10Z"/><path d="M2.4 4 H6.6 L7.4 15.4 H0.8Z M9.4 4 H13.6 L15.2 15.4 H8.6Z"/><rect x="6.6" y="5" width="2.8" height="3.4"/></g><path d="M1.6 11.4 H7 M9 11.4 H14.6" stroke="#555" stroke-width="1"/></svg>
<svg class="b" style="left:1522px;top:14px;" width="16" height="16" viewBox="0 0 16 16"><path d="M8 1 C10.5 1 11.3 3 11.3 5 C11.3 7.5 10 9.5 8 9.5 C6 9.5 4.7 7.5 4.7 5 C4.7 3 5.5 1 8 1Z" fill="#f4f4f4" stroke="#222" stroke-width=".8"/><path d="M0.5 15.5 C0.5 12 3 11.5 5.5 10.5 C7 12 9 12 10.5 10.5 C13 11.5 15.5 12 15.5 15.5Z" fill="#f4f4f4" stroke="#222" stroke-width=".8"/></svg>
<svg class="b" style="left:1644px;top:14px;" width="16" height="16" viewBox="0 0 16 16"><path d="M0.5 2.5 H3.5 L5.5 10.5 H13.5 L15 4.5 H4" stroke="#f4f4f4" stroke-width="1.7" fill="none"/><path d="M4.5 5 H14.5 L13.2 10 H5.7Z" fill="#dcdcdc"/><path d="M7.5 4.5 V10.5 M10.5 4.5 V10.5 M4.5 7.5 H14" stroke="#555" stroke-width=".6"/><circle cx="6.5" cy="13.5" r="1.5" fill="#f4f4f4"/><circle cx="12.5" cy="13.5" r="1.5" fill="#f4f4f4"/></svg>
<svg class="b" style="left:1668px;top:14px;" width="16" height="16" viewBox="0 0 16 16"><path d="M8 3 L2.5 12.5 H13.5Z" fill="none" stroke="#2a3a7a" stroke-width="3.6" stroke-linejoin="round"/><g fill="#f4f4f4" stroke="#2a3a7a" stroke-width=".7"><circle cx="8" cy="3" r="2.3"/><circle cx="2.5" cy="12.5" r="2.3"/><circle cx="13.5" cy="12.5" r="2.3"/></g><path d="M8 3 L2.5 12.5 H13.5Z" fill="none" stroke="#f4f4f4" stroke-width="2.4" stroke-linejoin="round"/></svg>
<svg class="b" style="left:1714px;top:14px;" width="16" height="16" viewBox="0 0 16 16"><circle cx="8" cy="8" r="7.3" fill="#fff" stroke="#1d2b6b" stroke-width="1"/><text x="8" y="12.3" text-anchor="middle" font-family="Liberation Sans,sans-serif" font-weight="700" font-size="12" fill="#1d2b6b">?</text></svg>
<svg class="b" style="left:15px;top:60px;" width="36" height="36" viewBox="0 0 36 36"><path d="M3.9 31.9 L32 4" stroke="#e2e2e2" stroke-width="1.1"/><rect x="1.8" y="30.8" width="3.4" height="3.4" fill="#72c2f6"/><rect x="30.8" y="1.8" width="3.4" height="3.4" fill="#72c2f6"/></svg>
<svg class="b" style="left:58px;top:66px;" width="34" height="24" viewBox="0 0 34 24"><path d="M3.5 19.5 H23.5 A10.5 7.5 0 0 0 23.5 4.5" stroke="#e2e2e2" stroke-width="1.1" fill="none"/><rect x="1.8" y="17.8" width="3.4" height="3.4" fill="#72c2f6"/><rect x="21.8" y="17.8" width="3.4" height="3.4" fill="#72c2f6"/><rect x="21.8" y="2.8" width="3.4" height="3.4" fill="#72c2f6"/></svg>
<svg class="b" style="left:109px;top:61px;" width="33" height="33" viewBox="0 0 33 33"><circle cx="16.5" cy="16.5" r="15.4" fill="none" stroke="#e2e2e2" stroke-width="1.1"/><path d="M16.5 16.5 L24.5 8.5 M21 8 H25 V12" stroke="#72c2f6" stroke-width="1.2" fill="none"/><rect x="14.8" y="14.8" width="3.4" height="3.4" fill="#72c2f6"/></svg>
<svg class="b" style="left:156px;top:61px;" width="34" height="34" viewBox="0 0 34 34"><path d="M3.5 30.5 C4.5 16 13 5.5 30.5 3.5" stroke="#e2e2e2" stroke-width="1.1" fill="none"/><rect x="1.8" y="28.8" width="3.4" height="3.4" fill="#72c2f6"/><rect x="9.8" y="9.8" width="3.4" height="3.4" fill="#72c2f6"/><rect x="28.8" y="1.8" width="3.4" height="3.4" fill="#72c2f6"/></svg>
<svg class="b" style="left:197px;top:63px;" width="16" height="16" viewBox="0 0 16 16"><path d="M1.5 3.5 H14.5 V12.5 H1.5Z" fill="none" stroke="#e2e2e2" stroke-width="1.1"/><rect x="0.3" y="1.8" width="2.4" height="2.4" fill="#72c2f6"/><rect x="13.8" y="11.8" width="2.4" height="2.4" fill="#72c2f6"/></svg>
<svg class="b" style="left:196px;top:87px;" width="16" height="16" viewBox="0 0 16 16"><path d="M5 3.5 C1.5 4.5 0.5 7 1.5 9.5 C3 12.5 9 13 12 11.5" fill="none" stroke="#e2e2e2" stroke-width="1.1"/><path d="M12 11.5 C15.5 9.5 15.5 5.5 11 3.5" fill="none" stroke="#e2e2e2" stroke-width="1.1" stroke-dasharray="2 1.5"/><rect x="6.9" y="1.4" width="2.2" height="2.2" fill="#72c2f6"/><rect x="6.9" y="6.9" width="2.2" height="2.2" fill="#72c2f6"/><rect x="13.9" y="6.9" width="2.2" height="2.2" fill="#72c2f6"/></svg>
<svg class="b" style="left:197px;top:111px;" width="16" height="16" viewBox="0 0 16 16"><rect x="4" y="4" width="8" height="8" fill="#72c2f6"/><path d="M4 10 L10 4 M6 12 L12 6 M4 6.5 L6.5 4 M9.5 12 L12 9.5" stroke="#4a4a4a" stroke-width=".9"/><path d="M0.5 3.5 H15.5 M0.5 12.5 H15.5 M3.5 0.5 V15.5 M12.5 0.5 V15.5" stroke="#e2e2e2" stroke-width="1"/></svg>
<svg class="b" style="left:243px;top:63px;" width="16" height="16" viewBox="0 0 16 16"><path d="M8 2 V14 M2 8 H14" stroke="#f2f2f2" stroke-width="1.7"/><path d="M8 0 L11 4.2 H5Z M8 16 L11 11.8 H5Z M0 8 L4.2 5 V11Z M16 8 L11.8 5 V11Z" fill="#f6f6f6"/></svg>
<svg class="b" style="left:243px;top:87px;" width="16" height="16" viewBox="0 0 16 16"><circle cx="3.6" cy="3.6" r="3" fill="none" stroke="#e2e2e2" stroke-width="1.1"/><path d="M8.5 1.8 H13 V5" fill="none" stroke="#f0f0f0" stroke-width="1.2"/><path d="M10.7 4.3 H15.3 L13 7.3Z" fill="#f0f0f0"/><circle cx="7.3" cy="12.6" r="3.2" fill="none" stroke="#72c2f6" stroke-width="1.2"/><path d="M11 9.9 A3.2 3.2 0 1 1 11 15.3" fill="none" stroke="#72c2f6" stroke-width="1.2"/></svg>
<svg class="b" style="left:243px;top:111px;" width="16" height="16" viewBox="0 0 16 16"><path d="M1.5 1 H7 V15.5 H1.5Z M7 11.5 H10.5 M9 9.8 L11 11.5 L9 13.2" fill="none" stroke="#e2e2e2" stroke-width="1.1"/><path d="M10.5 1 L15.5 15.5 H9" fill="none" stroke="#72c2f6" stroke-width="1.1"/></svg>
<svg class="b" style="left:315px;top:63px;" width="16" height="16" viewBox="0 0 16 16"><path d="M11.5 2.6 A6.6 6.6 0 1 0 14.6 8.2" fill="none" stroke="#e2e2e2" stroke-width="1.2"/><path d="M8.2 0.2 L13.2 2.2 L9.6 5.6Z" fill="#e2e2e2"/></svg>
<svg class="b" style="left:314px;top:87px;" width="16" height="16" viewBox="0 0 16 16"><path d="M7 2.5 V14.5 H1.4Z" fill="none" stroke="#e2e2e2" stroke-width="1.1"/><path d="M9.5 2.5 V14.5 H15.2Z" fill="none" stroke="#72c2f6" stroke-width="1.1"/></svg>
<svg class="b" style="left:315px;top:111px;" width="16" height="16" viewBox="0 0 16 16"><path d="M0.5 5.5 V0.5 H15.5 V15.5 H10.5" fill="none" stroke="#72c2f6" stroke-width="1.1"/><rect x="0.5" y="7.5" width="8" height="8" fill="none" stroke="#e2e2e2" stroke-width="1.1"/></svg>
<svg class="b" style="left:384px;top:63px;" width="16" height="16" viewBox="0 0 16 16"><path d="M0 1.5 H8.2" stroke="#72c2f6" stroke-width="1.1" stroke-dasharray="2 1.2"/><path d="M12 1.5 H16" stroke="#e2e2e2" stroke-width="1.1"/><path d="M9 0.3 L10.3 0.3 L11.8 10.2 L9.9 10.6Z M3.7 4.2 L5 3.6 L11.2 10.2 L9.6 11.2Z" fill="#f2f2f2"/><circle cx="8.9" cy="13.6" r="1.9" fill="none" stroke="#f2f2f2" stroke-width="1.2"/><circle cx="13" cy="12" r="1.9" fill="none" stroke="#f2f2f2" stroke-width="1.2"/></svg>
<svg class="b" style="left:384px;top:87px;" width="16" height="16" viewBox="0 0 16 16"><path d="M0.6 8.2 C0.6 3.6 4 0.6 8.8 0.5" fill="none" stroke="#72c2f6" stroke-width="1.3"/><path d="M10.3 0.5 H16 M0.6 10.6 V16" stroke="#e2e2e2" stroke-width="1.1"/></svg>
<svg class="b" style="left:384px;top:111px;" width="16" height="16" viewBox="0 0 16 16"><g fill="none" stroke-width="1.1"><rect x="1.5" y="1.5" width="5" height="5" stroke="#e2e2e2"/><g stroke="#72c2f6"><rect x="9.5" y="1.5" width="5" height="5"/><rect x="1.5" y="9.5" width="5" height="5"/><rect x="9.5" y="9.5" width="5" height="5"/></g></g></svg>
<svg class="b" style="left:459px;top:63px;" width="16" height="16" viewBox="0 0 16 16"><path d="M16 0.2 V6 L10 12.5 L7 9.5Z" fill="#fdc97d"/><path d="M7 9.5 L10 12.5 L9 13.6 L6 10.6Z" fill="#fafafa"/><path d="M6 10.6 L9 13.6 L6.6 15.2 L4.3 14.8 L3.8 12.6Z" fill="#b5683f"/><path d="M0.5 15.6 H3.2" stroke="#e2e2e2" stroke-width="1"/><path d="M8.6 15.6 H16" stroke="#72c2f6" stroke-width="1"/></svg>
<svg class="b" style="left:459px;top:87px;" width="16" height="16" viewBox="0 0 16 16"><path d="M2.4 4.5 L5.9 1.3 H13.8 L10.2 4.5Z M12.7 13.8 L15.7 11.3 V3.1 L12.7 5.3Z M0.5 6 V14.5" fill="none" stroke="#72c2f6" stroke-width="1.1"/><rect x="2.6" y="6.4" width="8" height="8" fill="none" stroke="#e2e2e2" stroke-width="1.1"/></svg>
<svg class="b" style="left:459px;top:111px;" width="16" height="16" viewBox="0 0 16 16"><path d="M16 2.4 H6.2 A5.85 5.85 0 0 0 6.2 14.1 H16" fill="none" stroke="#72c2f6" stroke-width="1.2"/><path d="M16 5.3 H6.4 A2.8 2.8 0 0 0 6.4 10.9 H16" fill="none" stroke="#e2e2e2" stroke-width="1.2"/></svg>
<svg class="b" style="left:496px;top:62px;" width="28" height="31" viewBox="0 0 28 31"><text x="14" y="30" text-anchor="middle" font-family="Liberation Sans,sans-serif" font-size="40.5" fill="#dedede" textLength="27" lengthAdjust="spacingAndGlyphs">A</text></svg>
<svg class="b" style="left:545px;top:61px;" width="34" height="34" viewBox="0 0 34 34"><path d="M1.5 0.5 V33 M32.5 0.5 V33 M2 7.5 H32" stroke="#e2e2e2" stroke-width="1.1"/><path d="M2 7.5 L6 5.5 V9.5Z M32 7.5 L28 5.5 V9.5Z" fill="#e2e2e2"/><g fill="#fdc97d"><path d="M16.2 16.6 L17.6 16.6 L18.9 22.9 L14.9 22.9Z"/><path d="M7.67 20.37 L8.33 19.63 L13.9 22.86 L11.5 25.54Z"/><path d="M26.13 20.37 L25.47 19.63 L19.9 22.86 L22.3 25.54Z"/><path d="M4.9 28 L4.9 28.8 L11.2 30.5 L11.2 27.3Z"/><path d="M28.9 28 L28.9 28.8 L22.6 30.5 L22.6 27.3Z"/></g></svg>
<svg class="b" style="left:599px;top:63px;" width="16" height="16" viewBox="0 0 16 16"><path d="M0.5 1 V15.5 M15.5 1 V15.5" stroke="#e2e2e2" stroke-width="1.1"/><path d="M2 5.5 H14" stroke="#7fc8f8" stroke-width="1.1"/><path d="M1.5 5.5 L4.5 3.8 V7.2Z M14.5 5.5 L11.5 3.8 V7.2Z" fill="#7fc8f8"/></svg>
<svg class="b" style="left:599px;top:87px;" width="16" height="16" viewBox="0 0 16 16"><circle cx="12.5" cy="4" r="3" fill="none" stroke="#e2e2e2" stroke-width="1.1"/><path d="M9.5 4 H7.5 C5 5 3.5 9 1.5 13" fill="none" stroke="#e2e2e2" stroke-width="1.1"/><path d="M0.5 14.5 L1 9.8 L4.6 12.6Z" fill="#e2e2e2"/></svg>
<svg class="b" style="left:599px;top:111px;" width="16" height="16" viewBox="0 0 16 16"><rect x="0.5" y="1.5" width="15" height="13" fill="none" stroke="#e2e2e2" stroke-width="1.1"/><path d="M0.5 5 H15.5 M0.5 8.2 H15.5 M0.5 11.4 H15.5 M5.5 5 V14.5 M10.5 5 V14.5" stroke="#e2e2e2" stroke-width="1"/><path d="M1 3 H15" stroke="#e2e2e2" stroke-width="1.6"/></svg>
<svg class="b" style="left:689px;top:61px;" width="35" height="34" viewBox="0 0 35 34"><path d="M12 1 H28 L18 12.5 H1Z" fill="#dedede"/><path d="M12 8 H28 L18 19.5 H1Z" fill="#d2d2d2" stroke="#5c5c5c" stroke-width="1"/><path d="M12 15 H28 L18 24.5 H1Z" fill="#dedede" stroke="#5c5c5c" stroke-width="1"/><rect x="19.5" y="14.5" width="13" height="18" fill="#f2f2f2" stroke="#5c5c5c" stroke-width="1"/><rect x="22" y="17" width="8" height="6" fill="#7fc8f8"/><path d="M23 26 H30 M28 24.5 L30 26 M22.5 29.5 H29.5 M24.5 31 L22.5 29.5" stroke="#444" stroke-width="1" fill="none"/></svg>
<svg class="b" style="left:741px;top:63px;" width="16" height="16" viewBox="0 0 16 16"><circle cx="8" cy="6.3" r="5.3" fill="#fdc97d"/><path d="M6 11 H10 V14 C10 15.2 6 15.2 6 14Z" fill="#fff"/><path d="M6 12.8 H10" stroke="#999" stroke-width=".7"/></svg>
<svg class="b" style="left:759px;top:63px;" width="16" height="16" viewBox="0 0 16 16"><circle cx="8" cy="8" r="4.2" fill="#fdc97d"/><g stroke="#fdc97d" stroke-width="1.2"><path d="M8 0.3 V2.6 M8 13.4 V15.7 M0.3 8 H2.6 M13.4 8 H15.7 M2.5 2.5 L4.2 4.2 M11.8 11.8 L13.5 13.5 M2.5 13.5 L4.2 11.8 M11.8 4.2 L13.5 2.5"/></g></svg>
<svg class="b" style="left:779px;top:62px;" width="16" height="16" viewBox="0 0 16 16"><rect x="1" y="7.5" width="10" height="8" fill="#fdc97d"/><path d="M8.5 7.5 V4.5 A3 3 0 0 1 14.5 4.5 V6.5" fill="none" stroke="#fdc97d" stroke-width="1.6"/><rect x="5.2" y="10" width="1.6" height="3" fill="#555"/></svg>
<svg class="b" style="left:741px;top:87px;" width="16" height="16" viewBox="0 0 16 16"><path d="M4.5 1 h8.8 l-4.5 6 h-8.8z" fill="#dadada"/><circle cx="12.5" cy="9.6" r="3.5" fill="#7fc8f8"/><path d="M11.2 13 h2.6 v2 c0 1.2 -2.6 1.2 -2.6 0z" fill="#fff"/></svg>
<svg class="b" style="left:765px;top:87px;" width="16" height="16" viewBox="0 0 16 16"><path d="M4.5 6 h8.8 l-4.5 6 h-8.8z" fill="#7fc8f8"/><path d="M4.5 4.2 h8.8 l-4.5 6 h-8.8z" fill="#5c5c5c"/><path d="M4.5 3 h8.8 l-4.5 6 h-8.8z" fill="#dadada"/><path d="M4.5 1.2 h8.8 l-4.5 6 h-8.8z" fill="#5c5c5c"/><path d="M4.5 0 h8.8 l-4.5 6 h-8.8z" fill="#dadada"/><path d="M16 9.5 L10.5 15 M9.5 11 V16 H14.5Z" stroke="#e4e4e4" stroke-width="1.2" fill="#e4e4e4"/></svg>
<svg class="b" style="left:789px;top:87px;" width="16" height="16" viewBox="0 0 16 16"><path d="M4.5 1 h8.8 l-4.5 6 h-8.8z" fill="#dadada"/><g stroke="#7fc8f8" stroke-width="1.1" fill="none"><path d="M11.5 6.5 V15.5 M7.6 8.7 L15.4 13.3 M7.6 13.3 L15.4 8.7"/><path d="M11.5 8.3 L14.3 9.9 V12.1 L11.5 13.7 L8.7 12.1 V9.9Z"/></g></svg>
<svg class="b" style="left:813px;top:87px;" width="16" height="16" viewBox="0 0 16 16"><path d="M4.5 1 h8.8 l-4.5 6 h-8.8z" fill="#dadada"/><rect x="9.5" y="10.5" width="6.5" height="5.5" fill="#7fc8f8"/><path d="M10.9 10.5 V9 A1.9 1.9 0 0 1 14.7 9 V10.5" fill="none" stroke="#7fc8f8" stroke-width="1.3"/><rect x="12.2" y="12.2" width="1.2" height="1.8" fill="#555"/></svg>
<svg class="b" style="left:837px;top:87px;" width="16" height="16" viewBox="0 0 16 16"><path d="M5.5 5 h10.5 l-4.5 4.2 h-10.5z" fill="#7fc8f8"/><path d="M1 10.2 h10.5 l4.5 -4.2 v1.6 l-4.5 4.2 h-10.5z" fill="#dadada" transform="translate(0 0.6)"/><path d="M1 10.2 h10.5 l4.5 -4.2 v1.6 l-4.5 4.2 h-10.5z" fill="#dadada" transform="translate(0 3.4)"/><circle cx="8.8" cy="3.2" r="3" fill="#d4d4d4"/></svg>
<svg class="b" style="left:741px;top:111px;" width="16" height="16" viewBox="0 0 16 16"><path d="M4.5 6 h8.8 l-4.5 6 h-8.8z" fill="#dadada"/><path d="M4.5 4.2 h8.8 l-4.5 6 h-8.8z" fill="#5c5c5c"/><path d="M4.5 3 h8.8 l-4.5 6 h-8.8z" fill="#dadada"/><path d="M4.5 1.2 h8.8 l-4.5 6 h-8.8z" fill="#5c5c5c"/><path d="M4.5 0 h8.8 l-4.5 6 h-8.8z" fill="#dadada"/><circle cx="12.5" cy="9.6" r="3.5" fill="#fdc97d"/><path d="M11.2 13 h2.6 v2 c0 1.2 -2.6 1.2 -2.6 0z" fill="#fff"/></svg>
<svg class="b" style="left:765px;top:111px;" width="16" height="16" viewBox="0 0 16 16"><path d="M4.5 6 h8.8 l-4.5 6 h-8.8z" fill="#7fc8f8"/><path d="M4.5 4.2 h8.8 l-4.5 6 h-8.8z" fill="#5c5c5c"/><path d="M4.5 3 h8.8 l-4.5 6 h-8.8z" fill="#dadada"/><path d="M4.5 1.2 h8.8 l-4.5 6 h-8.8z" fill="#5c5c5c"/><path d="M4.5 0 h8.8 l-4.5 6 h-8.8z" fill="#dadada"/><path d="M10 15.5 L15 10.5 M11.5 9.5 H16 V14Z" stroke="#e4e4e4" stroke-width="1.2" fill="#e4e4e4"/></svg>
<svg class="b" style="left:789px;top:111px;" width="16" height="16" viewBox="0 0 16 16"><path d="M4.5 6 h8.8 l-4.5 6 h-8.8z" fill="#dadada"/><path d="M4.5 4.2 h8.8 l-4.5 6 h-8.8z" fill="#5c5c5c"/><path d="M4.5 3 h8.8 l-4.5 6 h-8.8z" fill="#dadada"/><path d="M4.5 1.2 h8.8 l-4.5 6 h-8.8z" fill="#5c5c5c"/><path d="M4.5 0 h8.8 l-4.5 6 h-8.8z" fill="#dadada"/><circle cx="11.8" cy="11.2" r="2.6" fill="#fdc97d"/><g fill="#fdc97d"><circle cx="11.8" cy="6.7" r=".8"/><circle cx="11.8" cy="15.7" r=".8"/><circle cx="7.3" cy="11.2" r=".8"/><circle cx="16.3" cy="11.2" r=".8"/><circle cx="8.6" cy="8" r=".8"/><circle cx="15" cy="8" r=".8"/><circle cx="8.6" cy="14.4" r=".8"/><circle cx="15" cy="14.4" r=".8"/></g></svg>
<svg class="b" style="left:813px;top:111px;" width="16" height="16" viewBox="0 0 16 16"><path d="M4.5 1 h8.8 l-4.5 6 h-8.8z" fill="#dadada"/><rect x="7.5" y="11" width="6.5" height="5" fill="#fdc97d"/><path d="M12.4 11 V9.2 A1.8 1.8 0 0 1 16 9.2 V10.2" fill="none" stroke="#fdc97d" stroke-width="1.3"/><rect x="10.2" y="12.6" width="1.2" height="1.6" fill="#555"/></svg>
<svg class="b" style="left:837px;top:111px;" width="16" height="16" viewBox="0 0 16 16"><path d="M4.5 6 h8.8 l-4.5 6 h-8.8z" fill="#dadada"/><path d="M4.5 4.2 h8.8 l-4.5 6 h-8.8z" fill="#5c5c5c"/><path d="M4.5 3 h8.8 l-4.5 6 h-8.8z" fill="#dadada"/><path d="M4.5 1.2 h8.8 l-4.5 6 h-8.8z" fill="#5c5c5c"/><path d="M4.5 0 h8.8 l-4.5 6 h-8.8z" fill="#dadada"/><path d="M7.5 11 L10.5 8 L15 12.5 L12 15.5Z" fill="#fdc97d"/><path d="M10 7.5 L12 5.5 L13.2 6.7 L14.4 5.5 L16.6 7.7 L15.4 8.9 L16.6 10.1 L14.6 12.1Z" fill="#fff"/></svg>
<svg class="b" style="left:952px;top:59px;" width="35" height="35" viewBox="0 0 35 35"><path d="M16 1 H28.5 L33 5.5 V25 H16Z" fill="#8fcdf7"/><path d="M28.5 1 V5.5 H33Z" fill="#d6ecfb"/><rect x="2.5" y="11.5" width="20" height="14" fill="#8a8a8a"/><circle cx="22.5" cy="25.5" r="7.2" fill="#8a8a8a"/><rect x="2.5" y="11.5" width="20" height="14" fill="none" stroke="#dadada" stroke-width="1.2"/><circle cx="22.5" cy="25.5" r="7.2" fill="none" stroke="#dadada" stroke-width="1.2"/><rect x="1" y="24" width="3" height="3" fill="#e6e6e6"/></svg>
<svg class="b" style="left:992px;top:63px;" width="16" height="16" viewBox="0 0 16 16"><rect x="2" y="5.5" width="8.5" height="7" fill="#868686"/><circle cx="11.2" cy="12.2" r="3" fill="#868686"/><rect x="2" y="5.5" width="8.5" height="7" fill="none" stroke="#d6d6d6" stroke-width="1"/><circle cx="11.2" cy="12.2" r="3" fill="none" stroke="#d6d6d6" stroke-width="1"/><rect x="1" y="11.5" width="2" height="2" fill="#e6e6e6"/><path d="M12.40 0.00 L13.13 2.64 L15.51 1.29 L14.16 3.67 L16.80 4.40 L14.16 5.13 L15.51 7.51 L13.13 6.16 L12.40 8.80 L11.67 6.16 L9.29 7.51 L10.64 5.13 L8.00 4.40 L10.64 3.67 L9.29 1.29 L11.67 2.64Z" fill="#fdc97d"/></svg>
<svg class="b" style="left:992px;top:87px;" width="16" height="16" viewBox="0 0 16 16"><rect x="2" y="5.5" width="8.5" height="7" fill="#868686"/><circle cx="11.2" cy="12.2" r="3" fill="#868686"/><rect x="2" y="5.5" width="8.5" height="7" fill="none" stroke="#d6d6d6" stroke-width="1"/><circle cx="11.2" cy="12.2" r="3" fill="none" stroke="#d6d6d6" stroke-width="1"/><rect x="1" y="11.5" width="2" height="2" fill="#e6e6e6"/><path d="M8.8 7.5 L11.5 7.6 L9.1 4.8Z" fill="#f4f4f4"/><path d="M11.5 7.6 L15.5 4.1 L13.2 1.4 L9.1 4.8Z" fill="#fdc97d"/><path d="M15.5 4.1 L17 2.9 L14.6 0.2 L13.2 1.4Z" fill="#b5683f"/></svg>
<svg class="b" style="left:992px;top:111px;" width="16" height="16" viewBox="0 0 16 16"><path d="M1.4 1.8 H7.3 L14.6 8.8 L8.8 14.6 L1.4 7.3Z" fill="#ececec"/><circle cx="4" cy="4.3" r="1.1" fill="#5c5c5c"/><path d="M5.5 8.5 L8.8 11.6 L12.4 8" stroke="#5c5c5c" stroke-width="1.5" fill="none"/><path d="M8.8 7.5 L11.5 7.6 L9.1 4.8Z" fill="#f4f4f4"/><path d="M11.5 7.6 L15.5 4.1 L13.2 1.4 L9.1 4.8Z" fill="#fdc97d"/><path d="M15.5 4.1 L17 2.9 L14.6 0.2 L13.2 1.4Z" fill="#b5683f"/></svg>
<svg class="b" style="left:1125px;top:61px;" width="33" height="34" viewBox="0 0 33 34"><rect x="1" y="1" width="19" height="27" fill="#e6e6e6"/><rect x="3.5" y="3.5" width="14" height="10" fill="#8fcdf7"/><path d="M3.5 19 H11 M6 17 V21 M3.5 24 H13 M10 22 V26" stroke="#555" stroke-width="1.2"/><path d="M14.5 23.5 L20.5 17.5 L29 26 L23 32Z" fill="#f5cf86"/><path d="M20.5 17.5 L24 14 L28 12 L31.5 15.5 L29.5 19.5 L26 23Z" fill="#f4f4f4"/><path d="M16.5 21.5 L25.5 30.5" stroke="#c89a4a" stroke-width="1"/></svg>
<svg class="b" style="left:1173px;top:62px;" width="16" height="16" viewBox="0 0 16 16"><circle cx="8" cy="8" r="7.8" fill="#e9b56b"/><path d="M8 8 L8 0.2 A7.8 7.8 0 0 0 0.5 6Z" fill="#5fc27a"/><path d="M8 8 L0.5 6 A7.8 7.8 0 0 0 4.5 15Z" fill="#5aa5e0"/><path d="M8 8 L4.5 15 A7.8 7.8 0 0 0 11.5 15Z" fill="#7a5cc9"/><path d="M8 8 L11.5 15 A7.8 7.8 0 0 0 15.6 9.5Z" fill="#d8584a"/></svg>
<svg class="b" style="left:1173px;top:86px;" width="16" height="16" viewBox="0 0 16 16"><path d="M0 0.7 H16" stroke="#dcdcdc" stroke-width="1.1"/><path d="M0 3.6 H16" stroke="#dcdcdc" stroke-width="2"/><path d="M0 8.3 H16" stroke="#dcdcdc" stroke-width="3"/><path d="M0 13.8 H16" stroke="#dcdcdc" stroke-width="3.8"/></svg>
<svg class="b" style="left:1173px;top:110px;" width="16" height="16" viewBox="0 0 16 16"><g stroke="#dcdcdc" stroke-width="1.2"><path d="M0 2 H15.5" stroke-dasharray="1 1"/><path d="M0 5 H15.5" stroke-dasharray="2 1"/><path d="M0 8.2 H15.5"/><path d="M0 11.4 H15.5" stroke-dasharray="4 1.5"/><path d="M0 14.6 H15.5" stroke-dasharray="3 1 1 1"/></g></svg>
<svg class="b" style="left:1378px;top:61px;" width="34" height="34" viewBox="0 0 34 34"><path d="M6.5 5.2 H2 V31.6 H6.5 M17 31.6 H21.5 V19.5" fill="none" stroke="#f4f4f4" stroke-width="1.7"/><rect x="6.3" y="8.3" width="10.6" height="8.4" rx="1" fill="#4aa3e8"/><path d="M9 11.5 h3 l1 1 h2.2 v2.7 h-6.2z" fill="#2e6fb5"/><circle cx="11.4" cy="23.6" r="4.7" fill="#9a9a9a" stroke="#cfcfcf" stroke-width="1.7"/><path d="M23.50 1.30 L24.49 6.90 L27.46 5.34 L25.90 8.31 L31.50 9.30 L25.90 10.29 L27.46 13.26 L24.49 11.70 L23.50 17.30 L22.51 11.70 L19.54 13.26 L21.10 10.29 L15.50 9.30 L21.10 8.31 L19.54 5.34 L22.51 6.90Z" fill="#fdcf86"/></svg>
<svg class="b" style="left:1420px;top:63px;" width="16" height="16" viewBox="0 0 16 16"><path d="M10.4 0.6 H12.8 V15.2 H10.4" fill="none" stroke="#f0f0f0" stroke-width="1.2"/><rect x="2.5" y="2.7" width="5.4" height="3.8" fill="#5c5c5c" stroke="#7fc8f8" stroke-width="1.2"/><circle cx="5" cy="10.8" r="2.5" fill="#9a9a9a" stroke="#c9c9c9" stroke-width="1.1"/><path d="M9.8 6 L15.4 11.6 M15.4 6 L9.8 11.6" stroke="#c8673f" stroke-width="1.7"/></svg>
<svg class="b" style="left:1420px;top:87px;" width="16" height="16" viewBox="0 0 16 16"><path d="M3 0.7 H0.8 V13.3 H3 M8.6 0.7 H10.6 V13.3 H8.6" fill="none" stroke="#f0f0f0" stroke-width="1.1"/><rect x="3.6" y="2.5" width="4.6" height="3.2" fill="#5c5c5c" stroke="#7fc8f8" stroke-width="1.2"/><circle cx="5.4" cy="9.4" r="2.3" fill="#9a9a9a" stroke="#c9c9c9" stroke-width="1"/><path d="M7.4 14.9 L10.2 14.2 L8.6 12.4Z" fill="#f4f4f4"/><path d="M10.2 14.2 L14.6 10.2 L13 8.4 L8.6 12.4Z" fill="#fdc97d"/><path d="M14.6 10.2 L15.9 9 L14.3 7.2 L13 8.4Z" fill="#b5683f"/></svg>
<svg class="b" style="left:1420px;top:111px;" width="16" height="16" viewBox="0 0 16 16"><path d="M3 0.7 H0.8 V13.6 H3 M8.6 0.7 H10.6 V3.4" fill="none" stroke="#fff" stroke-width="1.1"/><rect x="3.6" y="2.6" width="4.6" height="3.4" fill="none" stroke="#6fdc80" stroke-width="1.3"/><circle cx="5.4" cy="10" r="2.5" fill="none" stroke="#6fdc80" stroke-width="1.3"/><path d="M9.4 3.6 V14.2 L11.6 12.3 L13.2 15.8 L14.8 15 L13.2 11.7 L16.2 11.4Z" fill="#fff" stroke="#2c3f7a" stroke-width=".5"/></svg>
<svg class="b" style="left:1464px;top:69px;" width="31" height="18" viewBox="0 0 31 18"><path d="M1.5 1.5 V9.5 M29.5 1.5 V9.5 M2 5 H29" stroke="#e2e2e2" stroke-width="1.1"/><path d="M1.8 5 L5.4 3 V7Z M29.2 5 L25.6 3 V7Z" fill="#e2e2e2"/><rect x="1" y="11" width="29" height="6" fill="#fdd487"/><rect x="2.5" y="11" width="1" height="3" fill="#5c5c5c"/><rect x="5.5" y="11" width="1" height="2" fill="#5c5c5c"/><rect x="8.5" y="11" width="1" height="3" fill="#5c5c5c"/><rect x="11.5" y="11" width="1" height="2" fill="#5c5c5c"/><rect x="14.5" y="11" width="1" height="3" fill="#5c5c5c"/><rect x="17.5" y="11" width="1" height="2" fill="#5c5c5c"/><rect x="20.5" y="11" width="1" height="3" fill="#5c5c5c"/><rect x="23.5" y="11" width="1" height="2" fill="#5c5c5c"/><rect x="26.5" y="11" width="1" height="3" fill="#5c5c5c"/><rect x="29.5" y="11" width="1" height="2" fill="#5c5c5c"/></svg>
<svg class="b" style="left:1517px;top:64px;" width="16" height="16" viewBox="0 0 16 16"><path d="M0.5 3.5 V14 L3 11.8 L4.8 15.6 L6.6 14.7 L4.8 11.2 L8 10.8Z" fill="#fff"/><rect x="7.5" y="7.5" width="8.5" height="7.5" fill="#f4f4f4"/><path d="M9 9.5 H14.5 M9 11.3 H14.5 M9 13.1 H14.5" stroke="#3f7fc4" stroke-width="1"/><path d="M7.5 0 L4.5 4 H7 L5.5 7 L10.5 2.5 H8 L9.5 0Z" fill="#fdc97d"/></svg>
<svg class="b" style="left:1517px;top:87px;" width="16" height="16" viewBox="0 0 16 16"><rect x="0.7" y="0.7" width="13.4" height="13.4" rx="1.5" fill="none" stroke="#5fdc86" stroke-width="1.2" stroke-dasharray="2 1.3"/><rect x="2.8" y="5" width="7" height="7" fill="#4fcf7e"/><rect x="6" y="2.8" width="6" height="6" fill="#4fcf7e" stroke="#3f6f50" stroke-width="1"/><path d="M8.8 4.8 V15.2 L11 13.2 L12.6 16.8 L14.2 16 L12.6 12.7 L15.6 12.4Z" fill="#fff" stroke="#555" stroke-width=".5"/></svg>
<svg class="b" style="left:1517px;top:111px;" width="16" height="16" viewBox="0 0 16 16"><rect x="2.5" y="0.5" width="11" height="15" fill="#d8d8d8"/><rect x="4" y="2" width="8" height="3" fill="#5c5c5c"/><g fill="#5c5c5c"><rect x="4" y="6.5" width="2" height="2"/><rect x="7" y="6.5" width="2" height="2"/><rect x="10" y="6.5" width="2" height="2"/><rect x="4" y="9.5" width="2" height="2"/><rect x="7" y="9.5" width="2" height="2"/><rect x="10" y="9.5" width="2" height="2"/><rect x="4" y="12.5" width="2" height="2"/><rect x="7" y="12.5" width="2" height="2"/><rect x="10" y="12.5" width="2" height="2"/></g></svg>
<svg class="b" style="left:1553px;top:61px;" width="28" height="34" viewBox="0 0 28 34"><rect x="0.5" y="4" width="21" height="25" fill="#e0aa6a"/><rect x="7" y="1.5" width="8" height="4" fill="#f0f0f0"/><path d="M8.5 12 H22 L27 17 V33 H8.5Z" fill="#e2e2e2"/><path d="M22 12 V17 H27Z" fill="#fafafa"/></svg>
<svg class="b" style="left:1597px;top:64px;" width="16" height="16" viewBox="0 0 16 16"><rect x="0.5" y="1" width="11" height="11" fill="#d8d8d8"/><path d="M2.5 3.5 H9.5 M2.5 6 H9.5 M2.5 8.5 H6.5" stroke="#5c5c5c" stroke-width="1"/><path d="M7 5 L13.5 12 M14 5 L8.5 11.5" stroke="#f4f4f4" stroke-width="1.3"/><circle cx="8.2" cy="13.3" r="1.7" fill="none" stroke="#f4f4f4" stroke-width="1.1"/><circle cx="14" cy="13.3" r="1.7" fill="none" stroke="#f4f4f4" stroke-width="1.1"/></svg>
<svg class="b" style="left:1597px;top:87px;" width="16" height="16" viewBox="0 0 16 16"><path d="M1.5 1 H7 L9.5 3.5 V11 H1.5Z" fill="#cfcfcf"/><path d="M5.5 5 H11.5 L14.5 8 V15.5 H5.5Z" fill="#e6e6e6" stroke="#5c5c5c" stroke-width=".8"/></svg>
<svg class="b" style="left:1634px;top:66px;" width="34" height="25" viewBox="0 0 34 25"><path d="M1 0.5 H14.5 V10.5 H33 V24 H1Z" fill="#dedede"/></svg>
<svg class="b" style="left:800px;top:500px;" width="170" height="180" viewBox="0 0 170 180"><g fill="none" stroke="#8b8a86" stroke-width="1.15" transform="translate(83.65 91.55)"><circle r="76"/><circle r="66.9"/><circle r="38.5"/><circle r="17.3"/><path d="M0 -17.3 V-53.45 A20.9 20.9 0 0 1 38.9 -43 V-38.6 L12.25 -12.25" transform="rotate(0)"/><path d="M0 -17.3 V-53.45 A20.9 20.9 0 0 1 38.9 -43 V-38.6 L12.25 -12.25" transform="rotate(90)"/><path d="M0 -17.3 V-53.45 A20.9 20.9 0 0 1 38.9 -43 V-38.6 L12.25 -12.25" transform="rotate(180)"/><path d="M0 -17.3 V-53.45 A20.9 20.9 0 0 1 38.9 -43 V-38.6 L12.25 -12.25" transform="rotate(270)"/><path d="M38.97 -45.62 A60 60 0 0 1 59.94 2.62"/></g><text x="55.65" y="92.15" font-size="2.2" fill="#8d8c88" font-family="Liberation Sans,sans-serif">cadblocksfree</text></svg>
<svg class="b" style="left:24px;top:905px;" width="80" height="76" viewBox="0 0 80 76"><g stroke="#e8e8e8" stroke-width="1" fill="none"><path d="M6.5 19 V69.5 H57"/><rect x="2.5" y="64.5" width="9" height="9"/><path d="M8 3 L14.5 10 L21 3 M14.5 10 V16"/><path d="M61 55 L74 68 M74 55 L61 68"/></g></svg>
<svg class="b" style="left:1760px;top:222px;" width="134" height="134" viewBox="0 0 134 134"><circle cx="67" cy="67" r="53.6" fill="none" stroke="#434a54" stroke-width="13.4"/><rect x="41" y="41" width="52" height="52" fill="#b5b6b7"/><rect x="51" y="51" width="32" height="32" fill="#acadae"/><g font-family="Liberation Sans,sans-serif" font-weight="700" fill="#b0b0b2" text-anchor="middle"><text x="67" y="19" font-size="21.5">N</text><text x="67" y="132" font-size="21.5">S</text><text x="10.5" y="75" font-size="21.5">W</text><text x="123" y="75" font-size="21.5">E</text><text x="67" y="72" font-size="13.6" fill="#484848" textLength="22.5" lengthAdjust="spacingAndGlyphs">TOP</text></g></svg>
<div class="b" style="left:1803px;top:377px;width:48px;height:17px;background:#96979b;border-radius:4px;border:1px solid #6e6f73;box-sizing:border-box;"></div>
<span class="t" style="left:1807.50px;top:380.00px;font-size:11px;line-height:11px;color:#4d5056;letter-spacing:-1.082px;">WCS</span>
<svg class="b" style="left:1836px;top:381px;" width="11" height="8" viewBox="0 0 11 8"><path d="M1 1 H10 L5.5 6.5Z" fill="none" stroke="#aeb0b3" stroke-width="1"/></svg>
<div class="b" style="left:1873px;top:419px;width:34px;height:212px;background:#5e626a;border-radius:5px;border:1px solid #2c3036;box-sizing:border-box;"></div>
<svg class="b" style="left:1874px;top:419px;" width="33" height="212" viewBox="0 0 33 212"><g fill="none" stroke="#73777e" stroke-width="1.2"><circle cx="26" cy="5.5" r="3.2"/><path d="M23.8 3.3 L28.2 7.7"/><circle cx="26" cy="205.5" r="3.2"/><path d="M23.5 205.5 H28.5"/><path d="M16.5 19 H26 V29 A9.5 9.5 0 1 1 16.5 19Z"/><circle cx="16.5" cy="29" r="5"/><g transform="translate(0 7)"><path d="M12 75 C8 68 6 66 8 65 C10 64 12 68 13 68 V56 C13 54 16 54 16 56 V62 V53 C16 51 19 51 19 53 V62 V54 C19 52 22 52 22 54 V63 V57 C22 55 25 55 25 57 V68 C25 74 23 75 22 78 H13Z"/></g><g transform="translate(0 6)"><path d="M5 84 L17 96 M17 84 L5 96 M5 84 h3 M5 84 v3 M17 84 h-3 M17 84 v3 M5 96 h3 M5 96 v-3"/><circle cx="20" cy="97" r="4"/><path d="M23 100 L27 104" stroke-width="2.4"/></g><ellipse cx="16.5" cy="139" rx="11" ry="4.5"/><path d="M16.5 147 V128 M13 131 L16.5 125.5 L20 131Z M8 142 L5 145 L9 146"/><rect x="5" y="170" width="5.5" height="5.5"/><rect x="13" y="170" width="5.5" height="5.5"/><rect x="21" y="170" width="5.5" height="5.5"/><rect x="5" y="178.5" width="16" height="12"/><path d="M10 181 L16.5 184.5 L10 188Z" fill="#73777e"/></g><g fill="#73777e"><path d="M14 49 h5 l-2.5 3z M14 119 h5 l-2.5 3z M14 157 h5 l-2.5 3z"/></g><path d="M4 56.5 H29 M4 164.5 H29" stroke="#6a6e75" stroke-width="1" stroke-dasharray="1 1"/></svg>
<div class="b" style="left:179px;top:735px;width:305px;height:74px;background:#1b1b1b;border:1px solid #b9b9b9;box-sizing:border-box;background:repeating-linear-gradient(90deg,#191919 0,#191919 1px,#202020 1px,#202020 2px);"></div>
<div class="b" style="left:180px;top:736px;width:303px;height:72px;background:transparent;background:linear-gradient(rgba(255,255,255,.03),rgba(0,0,0,0) 50%,rgba(0,0,0,.35));"></div>
<svg class="b" style="left:179px;top:735px;" width="305" height="74" viewBox="0 0 305 74"><text x="22.5" y="47.6" font-family="Liberation Sans,sans-serif" font-weight="700" font-size="33" fill="#fff" textLength="62" lengthAdjust="spacingAndGlyphs">CAD</text><text x="85.5" y="47.6" font-family="Liberation Sans,sans-serif" font-size="33" fill="#fff" textLength="97" lengthAdjust="spacingAndGlyphs" stroke="#1b1b1b" stroke-width=".3">BLOCKS</text><text x="186" y="47.6" font-family="Liberation Serif,serif" font-style="italic" font-size="47" fill="#5b72b4" textLength="89" lengthAdjust="spacingAndGlyphs">free</text></svg>
<div class="b" style="left:484px;top:771.4px;width:818px;height:1.4px;background:#a9a9a9;"></div>
<span class="t" style="left:494.00px;top:754.00px;font-size:12.4px;line-height:12.4px;color:#2446c0;letter-spacing:0.208px;">These blocks were brought to you by CADBlocksFree.com</span>
<span class="t" style="left:494.00px;top:778.00px;font-size:13px;line-height:13px;color:#fff;font-weight:700;letter-spacing:-0.087px;">www.cadblocksfree.com</span>
<span class="t" style="left:945.50px;top:754.00px;font-size:12.4px;line-height:12.4px;color:#48489a;letter-spacing:0.174px;">For all of your 2D &amp; 3D CAD outsource requirements visit us:</span>
<span class="t" style="left:1154.00px;top:778.00px;font-size:13px;line-height:13px;color:#35357a;font-weight:700;letter-spacing:-0.150px;">www.cadmando.co.uk</span>
<div class="b" style="left:1302px;top:735px;width:305px;height:74px;background:#a48fd9;border:1px solid #5b55b8;box-sizing:border-box;background:linear-gradient(90deg,#8a72d0 0%,#8a72d0 15%,#a48fd9 29%,#a48fd9 38%,#b9a7df 50%,#b9a7df 59%,#cdc0e8 72%,#cdc0e8 79%,#dfdce7 93%,#dfdce7 100%);"></div>
<svg class="b" style="left:1302px;top:735px;" width="305" height="74" viewBox="0 0 305 74"><g font-family="Liberation Sans,sans-serif" font-weight="700" font-size="27.4" fill="#f5f5f1" text-anchor="middle"><text x="28.4" y="46.6">C</text><text x="56.5" y="46.6">A</text><text x="85.8" y="46.6">D</text><text x="138.8" y="46.6">M</text><text x="167.5" y="46.6">A</text><text x="196.7" y="46.6">N</text><text x="247.5" y="46.6">D</text><text x="277" y="46.6">O</text></g><rect x="109.5" y="33.5" width="7" height="7" fill="#39397a"/><rect x="219.5" y="33.5" width="7" height="7" fill="#39397a"/></svg>
<div class="b" style="left:389px;top:969px;width:56px;height:26px;background:#3a3a3a;border-radius:3px 0 0 0;background:linear-gradient(#4c4c4c,#2e2e2e);border:1px solid #2a2a2a;border-bottom:none;box-sizing:border-box;"></div>
<div class="b" style="left:445px;top:969px;width:1086px;height:26px;background:#c3c4c6;border-radius:0 3px 0 0;border-top:1px solid #d4d4d6;box-sizing:border-box;"></div>
<svg class="b" style="left:392px;top:972px;" width="8" height="20" viewBox="0 0 8 20"><path d="M1.5 0 V20 M4.5 0 V20" stroke="#9a9a9a" stroke-width="1.4" stroke-dasharray="1.5 1.5"/></svg>
<svg class="b" style="left:404px;top:977px;" width="10" height="9" viewBox="0 0 10 9"><path d="M1.5 1 L8.5 8 M8.5 1 L1.5 8" stroke="#e8e8e8" stroke-width="1.8"/></svg>
<svg class="b" style="left:424px;top:974px;" width="15" height="16" viewBox="0 0 15 16"><path d="M2 14.5 L9 7" stroke="#e4e4e4" stroke-width="2.6" stroke-linecap="round"/><path d="M13.5 4.8 A4 4 0 1 1 10.2 1.5 L10 4 L11.5 5.2Z" fill="#e4e4e4"/></svg>
<svg class="b" style="left:450px;top:974px;" width="16" height="14" viewBox="0 0 16 14"><rect x=".5" y=".5" width="15" height="12" fill="#bdbdbf" stroke="#444" stroke-width="1"/><rect x="1" y="1" width="14" height="3" fill="#444"/><path d="M3 6 L6 8 L3 10 M7.5 10.5 H11.5" stroke="#333" stroke-width="1.1" fill="none"/></svg>
<svg class="b" style="left:468px;top:978px;" width="6" height="4" viewBox="0 0 6 4"><path d="M0.8 0.9 h5 l-2.5 3 z" fill="#555"/></svg>
<span class="t" style="left:482.00px;top:976.00px;font-size:11.6px;line-height:11.6px;color:#7c7c7e;font-family:'Liberation Mono',monospace;font-style:italic;letter-spacing:-0.035px;">Type a command</span>
<svg class="b" style="left:1520px;top:979px;" width="9" height="6" viewBox="0 0 9 6"><path d="M0 5 L4.5 0 L9 5Z" fill="#222"/></svg>
<svg class="b" style="left:14px;top:995px;" width="70" height="18" viewBox="0 0 70 18"><defs><linearGradient id="gm" x1="0" y1="0" x2="0" y2="1"><stop offset="0" stop-color="#585858"/><stop offset=".5" stop-color="#6e6e6e"/><stop offset="1" stop-color="#8a8a8a"/></linearGradient></defs><path d="M2 0 C8 0 8 17.5 16 17.5 H56 C64 17.5 62 0 69 0Z" fill="url(#gm)"/></svg>
<svg class="b" style="left:78px;top:995px;" width="72" height="18" viewBox="0 0 72 18"><path d="M1 0 C7 0 5 17.5 13 17.5 H56 C64 17.5 64 0 70 0Z" fill="#575757"/></svg>
<svg class="b" style="left:148px;top:995px;" width="24" height="17" viewBox="0 0 24 17"><path d="M5 0 H23 C22 9 19 16 10 16 C2 16 1 14 1 13 C4 9 4 3 5 0Z" fill="#4d4d4d"/><path d="M7 9 H16 M11.5 4.5 V13.5" stroke="#d0d0d0" stroke-width="1.6"/></svg>
<span class="t" style="left:33.60px;top:998.00px;font-size:12px;line-height:12px;color:#fff;font-weight:700;letter-spacing:-0.041px;">Model</span>
<span class="t" style="left:91.60px;top:998.00px;font-size:12px;line-height:12px;color:#c9c9c9;letter-spacing:-0.301px;">Layout1</span>
<div class="b" style="left:1319px;top:996px;width:591px;height:28px;background:#4f4f4f;border-radius:0 0 6px 0;"></div>
<div class="b" style="left:1319px;top:996px;width:49px;height:26px;background:transparent;border:1px dotted #6c6c6c;box-sizing:border-box;"></div>
<div class="b" style="left:1371px;top:996px;width:63px;height:26px;background:transparent;border:1px dotted #6c6c6c;box-sizing:border-box;"></div>
<div class="b" style="left:1436px;top:996px;width:167px;height:26px;background:transparent;border:1px dotted #6c6c6c;box-sizing:border-box;"></div>
<div class="b" style="left:1605px;top:996px;width:106px;height:26px;background:transparent;border:1px dotted #6c6c6c;box-sizing:border-box;"></div>
<div class="b" style="left:1713px;top:996px;width:40px;height:26px;background:transparent;border:1px dotted #6c6c6c;box-sizing:border-box;"></div>
<div class="b" style="left:1754px;top:996px;width:25px;height:26px;background:transparent;border:1px dotted #6c6c6c;box-sizing:border-box;"></div>
<div class="b" style="left:1781px;top:996px;width:24px;height:26px;background:transparent;border:1px dotted #6c6c6c;box-sizing:border-box;"></div>
<div class="b" style="left:1807px;top:996px;width:50px;height:26px;background:transparent;border:1px dotted #6c6c6c;box-sizing:border-box;"></div>
<div class="b" style="left:1860px;top:996px;width:49px;height:26px;background:transparent;border:1px dotted #6c6c6c;box-sizing:border-box;"></div>
<span class="t" style="left:1324.50px;top:1003.00px;font-size:12px;line-height:12px;color:#f4f4f4;letter-spacing:-0.794px;">MODEL</span>
<div class="b" style="left:1438px;top:998px;width:22px;height:22px;background:#5b8cc6;"></div>
<div class="b" style="left:1541px;top:998px;width:22px;height:22px;background:#5b8cc6;"></div>
<div class="b" style="left:1565px;top:998px;width:22px;height:22px;background:#5b8cc6;"></div>
<div class="b" style="left:1607px;top:998px;width:22px;height:22px;background:#5b8cc6;"></div>
<svg class="b" style="left:1423px;top:1007px;" width="7" height="4.5" viewBox="0 0 7 4.5"><path d="M0.6 0.25 h6 l-3 3.5 z" fill="#f0f0f0"/></svg>
<svg class="b" style="left:1489px;top:1007px;" width="7" height="4.5" viewBox="0 0 7 4.5"><path d="M0.6 0.25 h6 l-3 3.5 z" fill="#f0f0f0"/></svg>
<svg class="b" style="left:1528px;top:1007px;" width="7" height="4.5" viewBox="0 0 7 4.5"><path d="M0.3 0.25 h6 l-3 3.5 z" fill="#f0f0f0"/></svg>
<svg class="b" style="left:1592px;top:1007px;" width="7" height="4.5" viewBox="0 0 7 4.5"><path d="M0.6 0.25 h6 l-3 3.5 z" fill="#f0f0f0"/></svg>
<svg class="b" style="left:1700px;top:1007px;" width="7" height="4.5" viewBox="0 0 7 4.5"><path d="M0.6 0.25 h6 l-3 3.5 z" fill="#f0f0f0"/></svg>
<svg class="b" style="left:1742px;top:1007px;" width="7" height="4.5" viewBox="0 0 7 4.5"><path d="M0.8 0.25 h6 l-3 3.5 z" fill="#f0f0f0"/></svg>
<span class="t" style="left:1682.30px;top:1003.00px;font-size:11.5px;line-height:11.5px;color:#f4f4f4;letter-spacing:-0.6px;">1:1</span>
<svg class="b" style="left:1374px;top:1001px;" width="16" height="16" viewBox="0 0 16 16"><path d="M1 4.5 H16 M1 8.5 H16 M1 12.5 H16 M3.5 1 V16 M8.5 1 V16 M13.5 1 V16" stroke="#f0f0f0" stroke-width="1" fill="none"/></svg>
<svg class="b" style="left:1399px;top:1001px;" width="16" height="16" viewBox="0 0 16 16"><g fill="#f0f0f0"><rect x="2" y="2" width="2" height="2"/><rect x="7" y="2" width="2" height="2"/><rect x="12" y="2" width="2" height="2"/><rect x="2" y="7" width="2" height="2"/><rect x="7" y="7" width="2" height="2"/><rect x="12" y="7" width="2" height="2"/><rect x="2" y="12" width="2" height="2"/><rect x="7" y="12" width="2" height="2"/><rect x="12" y="12" width="2" height="2"/></g></svg>
<svg class="b" style="left:1441px;top:1001px;" width="16" height="16" viewBox="0 0 16 16"><path d="M2.5 0 V14.5 H16 M2.5 10.5 H6.5 V14.5" stroke="#fff" stroke-width="1.3" fill="none"/></svg>
<svg class="b" style="left:1464px;top:1001px;" width="16" height="16" viewBox="0 0 16 16"><circle cx="7" cy="9" r="6" fill="none" stroke="#eee" stroke-width="1.2"/><path d="M7 9 H16 M7 9 L14 1.5" stroke="#eee" stroke-width="1.2"/></svg>
<svg class="b" style="left:1504px;top:1001px;" width="16" height="16" viewBox="0 0 16 16"><path d="M2 2 L14 15" stroke="#d86f3c" stroke-width="1.2"/><path d="M8 0 V16" stroke="#4fc46a" stroke-width="1.2"/><rect x="6.5" y="6.5" width="3" height="3" fill="#4f4f4f" stroke="#eee" stroke-width="1"/></svg>
<svg class="b" style="left:1544px;top:1001px;" width="16" height="16" viewBox="0 0 16 16"><path d="M1 14.5 H16 M1 14.5 L14 2.5" stroke="#fff" stroke-width="1.3" fill="none"/><rect x="6.5" y="6.5" width="3" height="3" fill="#fff"/></svg>
<svg class="b" style="left:1568px;top:1001px;" width="16" height="16" viewBox="0 0 16 16"><path d="M4 3.5 H15 V15 H4Z" stroke="#fff" stroke-width="1.3" fill="none"/><rect x="1.5" y="1.5" width="4.5" height="4.5" fill="#5b8cc6" stroke="#fff" stroke-width="1.2"/></svg>
<svg class="b" style="left:1608px;top:1002px;" width="16" height="16" viewBox="0 0 16 16"><path d="M8 1 L10 8.5 L15 14 L9.5 11.5 L8 14.5 L6.5 11.5 L1 14 L6 8.5Z" fill="#fff"/><circle cx="13.5" cy="3.5" r="2.2" fill="none" stroke="#fff" stroke-width="1.1"/></svg>
<svg class="b" style="left:1632px;top:1002px;" width="16" height="16" viewBox="0 0 16 16"><path d="M8 1 L10 8.5 L15 14 L9.5 11.5 L8 14.5 L6.5 11.5 L1 14 L6 8.5Z" fill="#d6d6d6"/><path d="M13 0 L10.5 4 H13 L11.5 7.5 L15.5 3 H13 L15 0Z" fill="#d6d6d6"/></svg>
<svg class="b" style="left:1658px;top:1002px;" width="16" height="16" viewBox="0 0 16 16"><path d="M8 1 L10 8.5 L15 14 L9.5 11.5 L8 14.5 L6.5 11.5 L1 14 L6 8.5Z" fill="#d6d6d6"/></svg>
<svg class="b" style="left:1718px;top:1001px;" width="16" height="16" viewBox="0 0 16 16"><g fill="#e6e6e6"><rect x="6.6" y="0.3" width="2.8" height="3.4" transform="rotate(0 8 8)"/><rect x="6.6" y="0.3" width="2.8" height="3.4" transform="rotate(45 8 8)"/><rect x="6.6" y="0.3" width="2.8" height="3.4" transform="rotate(90 8 8)"/><rect x="6.6" y="0.3" width="2.8" height="3.4" transform="rotate(135 8 8)"/><rect x="6.6" y="0.3" width="2.8" height="3.4" transform="rotate(180 8 8)"/><rect x="6.6" y="0.3" width="2.8" height="3.4" transform="rotate(225 8 8)"/><rect x="6.6" y="0.3" width="2.8" height="3.4" transform="rotate(270 8 8)"/><rect x="6.6" y="0.3" width="2.8" height="3.4" transform="rotate(315 8 8)"/></g><circle cx="8" cy="8" r="4.2" fill="none" stroke="#e6e6e6" stroke-width="2.6"/></svg>
<svg class="b" style="left:1758px;top:1001px;" width="16" height="16" viewBox="0 0 16 16"><path d="M0 8 H16 M8 0 V16" stroke="#f4f4f4" stroke-width="1.4"/></svg>
<svg class="b" style="left:1785px;top:1001px;" width="16" height="16" viewBox="0 0 16 16"><g fill="none" stroke="#e8e8e8" stroke-width="1.1"><rect x="1" y="1" width="5.5" height="5.5"/><circle cx="12.5" cy="7" r="3"/><path d="M3.5 15.5 L6.5 10.5 L9.5 15.5Z"/></g></svg>
<svg class="b" style="left:1811px;top:1001px;" width="16" height="16" viewBox="0 0 16 16"><rect x="1.5" y="1" width="10" height="8" fill="#6db7ea"/><rect x="1.5" y="9" width="6" height="4.5" fill="#f3c46a"/><rect x="7.5" y="9" width="4" height="4.5" fill="#2c55a0"/><path d="M9 1 h2.5 v3Z" fill="#fff"/><circle cx="5.5" cy="5" r="1.6" fill="none" stroke="#fff" stroke-width="1"/><path d="M5.5 1.5 V8.5 M2 5 H9" stroke="#fff" stroke-width=".8"/><path d="M9.5 12.5 L11.5 14.5 L15.5 10.5" stroke="#3fae5a" stroke-width="1.5" fill="none"/></svg>
<svg class="b" style="left:1835px;top:1001px;" width="16" height="16" viewBox="0 0 16 16"><rect x="1" y="2" width="13" height="9" fill="#e9e9e9"/><path d="M1 8 L5 3.5 L8 7 L10 5 L14 9.5" stroke="#5a8ec9" stroke-width="1.1" fill="none"/><path d="M11.5 8 L16 15.5 H7Z" fill="#c0623c"/><path d="M11.5 10.5 V13" stroke="#fff" stroke-width="1.1"/></svg>
<svg class="b" style="left:1864px;top:1001px;" width="16" height="16" viewBox="0 0 16 16"><rect x=".5" y="2.5" width="15" height="11" fill="none" stroke="#eee" stroke-width="1"/><path d="M9.5 7 L13 4 M10.5 4 H13 V6.5 M6.5 9 L3 12 M3 9.5 V12 H5.5" stroke="#eee" stroke-width="1" fill="none"/></svg>
<svg class="b" style="left:1888px;top:1001px;" width="16" height="16" viewBox="0 0 16 16"><path d="M0 3 H16 M0 8 H16 M0 13 H16" stroke="#f4f4f4" stroke-width="1.8"/></svg>
</body></html>
